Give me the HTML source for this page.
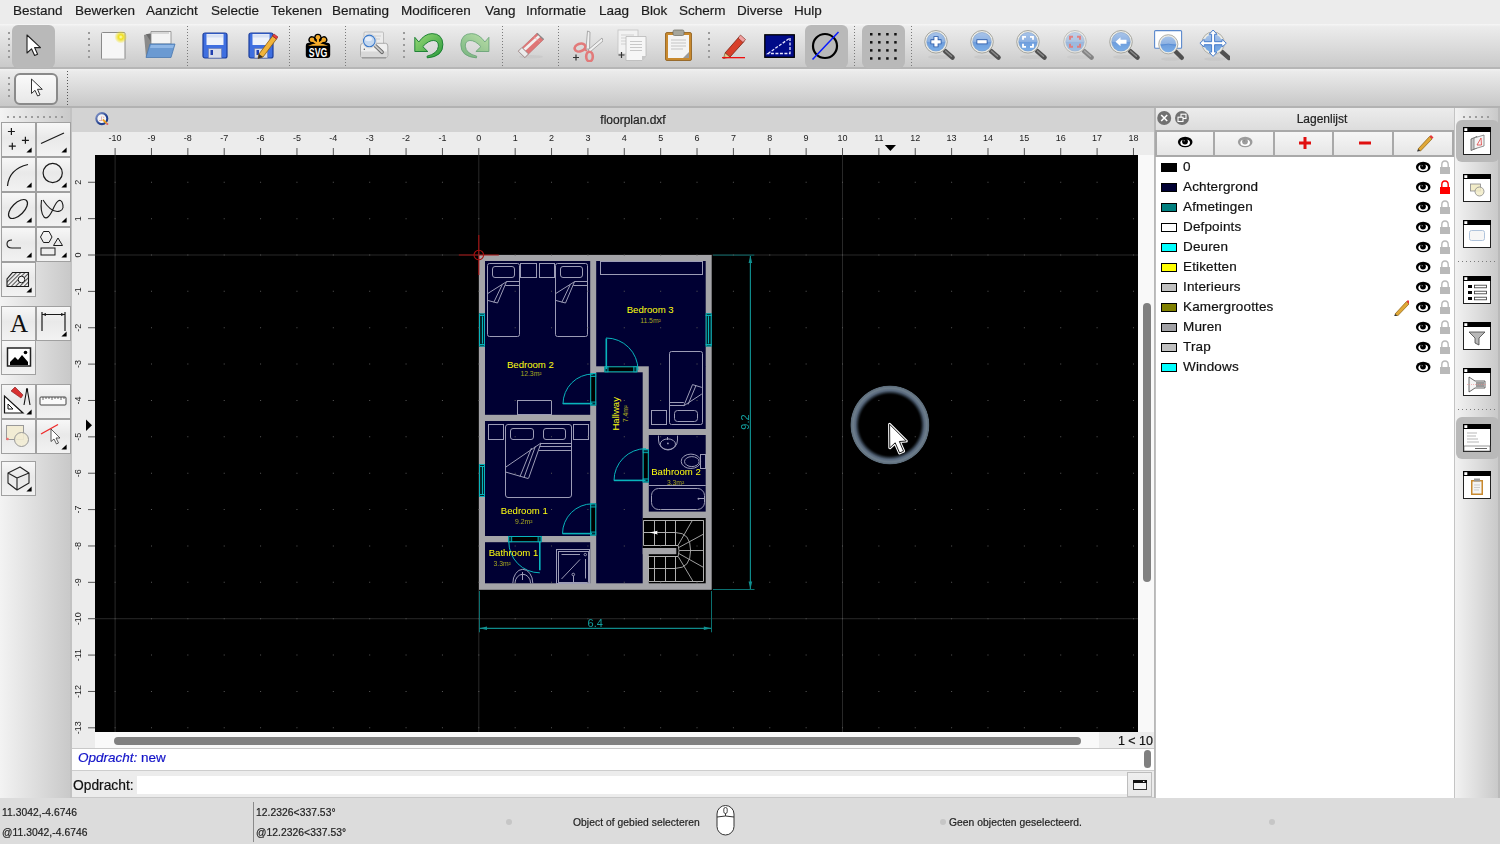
<!DOCTYPE html><html><head><meta charset="utf-8"><style>html,body{margin:0;padding:0;}body{width:1500px;height:844px;overflow:hidden;position:relative;background:#ececec;font-family:"Liberation Sans",sans-serif;}.t{will-change:transform;-webkit-text-stroke:0.2px currentColor}.g{will-change:transform}</style></head><body>
<div style="position:absolute;left:0px;top:0px;width:1500px;height:24px;background:#ececec"></div>
<div class="t" style="position:absolute;left:13.2px;top:4.17px;font-size:13.5px;line-height:13.5px;color:#1c1c1c;white-space:nowrap;">Bestand</div>
<div class="t" style="position:absolute;left:74.7px;top:4.17px;font-size:13.5px;line-height:13.5px;color:#1c1c1c;white-space:nowrap;">Bewerken</div>
<div class="t" style="position:absolute;left:145.89999999999998px;top:4.17px;font-size:13.5px;line-height:13.5px;color:#1c1c1c;white-space:nowrap;">Aanzicht</div>
<div class="t" style="position:absolute;left:210.7px;top:4.17px;font-size:13.5px;line-height:13.5px;color:#1c1c1c;white-space:nowrap;">Selectie</div>
<div class="t" style="position:absolute;left:271.2px;top:4.17px;font-size:13.5px;line-height:13.5px;color:#1c1c1c;white-space:nowrap;">Tekenen</div>
<div class="t" style="position:absolute;left:332.2px;top:4.17px;font-size:13.5px;line-height:13.5px;color:#1c1c1c;white-space:nowrap;">Bemating</div>
<div class="t" style="position:absolute;left:401.2px;top:4.17px;font-size:13.5px;line-height:13.5px;color:#1c1c1c;white-space:nowrap;">Modificeren</div>
<div class="t" style="position:absolute;left:485.2px;top:4.17px;font-size:13.5px;line-height:13.5px;color:#1c1c1c;white-space:nowrap;">Vang</div>
<div class="t" style="position:absolute;left:526.2px;top:4.17px;font-size:13.5px;line-height:13.5px;color:#1c1c1c;white-space:nowrap;">Informatie</div>
<div class="t" style="position:absolute;left:599.2px;top:4.17px;font-size:13.5px;line-height:13.5px;color:#1c1c1c;white-space:nowrap;">Laag</div>
<div class="t" style="position:absolute;left:640.7px;top:4.17px;font-size:13.5px;line-height:13.5px;color:#1c1c1c;white-space:nowrap;">Blok</div>
<div class="t" style="position:absolute;left:678.7px;top:4.17px;font-size:13.5px;line-height:13.5px;color:#1c1c1c;white-space:nowrap;">Scherm</div>
<div class="t" style="position:absolute;left:736.7px;top:4.17px;font-size:13.5px;line-height:13.5px;color:#1c1c1c;white-space:nowrap;">Diverse</div>
<div class="t" style="position:absolute;left:793.7px;top:4.17px;font-size:13.5px;line-height:13.5px;color:#1c1c1c;white-space:nowrap;">Hulp</div>
<div style="position:absolute;left:0px;top:24px;width:1500px;height:44px;background:linear-gradient(#f6f6f6 0,#ececec 6%,#dedede 45%,#c9c9c9 100%)"></div>
<div style="position:absolute;left:0px;top:67px;width:1500px;height:1.5px;background:#b6b6b6"></div>
<div style="position:absolute;left:0px;top:68.5px;width:1500px;height:38px;background:linear-gradient(#f2f2f2 0,#ebebeb 6%,#dcdcdc 45%,#c7c7c7 100%)"></div>
<div style="position:absolute;left:0px;top:106.3px;width:1500px;height:1.5px;background:#b2b2b2"></div>
<div style="position:absolute;left:7.5px;top:32.0px;width:2px;height:2px;background:#9a9a9a"></div><div style="position:absolute;left:7.5px;top:38.0px;width:2px;height:2px;background:#9a9a9a"></div><div style="position:absolute;left:7.5px;top:44.0px;width:2px;height:2px;background:#9a9a9a"></div><div style="position:absolute;left:7.5px;top:50.0px;width:2px;height:2px;background:#9a9a9a"></div><div style="position:absolute;left:7.5px;top:56.0px;width:2px;height:2px;background:#9a9a9a"></div>
<div style="position:absolute;left:12px;top:25px;width:43px;height:42.5px;background:#b9b9b9;border-radius:6px"></div>
<svg style="position:absolute;left:25px;top:34px" width="18" height="24" viewBox="0 0 18 24"><path d="M2 1 L2 19 L6.5 14.8 L9.6 21.5 L12.6 20.2 L9.6 13.6 L15.5 13.6 Z" fill="#fff" stroke="#222" stroke-width="1.1" stroke-linejoin="round"/></svg>
<div style="position:absolute;left:88px;top:32.0px;width:2px;height:2px;background:#9a9a9a"></div><div style="position:absolute;left:88px;top:38.0px;width:2px;height:2px;background:#9a9a9a"></div><div style="position:absolute;left:88px;top:44.0px;width:2px;height:2px;background:#9a9a9a"></div><div style="position:absolute;left:88px;top:50.0px;width:2px;height:2px;background:#9a9a9a"></div><div style="position:absolute;left:88px;top:56.0px;width:2px;height:2px;background:#9a9a9a"></div>
<svg style="position:absolute;left:100px;top:30px" width="30" height="32" viewBox="0 0 30 32"><defs><radialGradient id="sun" cx="0.5" cy="0.5" r="0.5"><stop offset="0" stop-color="#ffffc0"/><stop offset="0.35" stop-color="#f0e020"/><stop offset="1" stop-color="#f0e020" stop-opacity="0"/></radialGradient></defs><rect x="1.5" y="2.5" width="23.5" height="27" fill="#f6f6f6" stroke="#8a8a8a" stroke-width="1" rx="1"/><rect x="2" y="28.5" width="23" height="1.5" fill="#bbb"/><circle cx="20.8" cy="7" r="6.5" fill="url(#sun)"/></svg>
<svg style="position:absolute;left:143px;top:30px" width="34" height="30" viewBox="0 0 34 30"><path d="M1 5 L8 3 L8 27 L3 27 Z" fill="#8a8a8a"/><path d="M3 4 L22 4 L22 12 L8 12 Z" fill="#6a6a6a"/><path d="M8 1.5 L28 1.5 L28 14 L8 14 Z" fill="#f4f4f4" stroke="#888" stroke-width="0.8"/><path d="M7 3 L26 3" stroke="#bbb"/><path d="M7 14 L32 14 L28 27.5 L3 27.5 Z" fill="#6b9ad2" stroke="#4a78b0" stroke-width="0.8"/><path d="M8 15 L31 15 L30 18 L7 18 Z" fill="#8fb7e6"/></svg>
<div style="position:absolute;left:187.0px;top:26px;width:1px;height:40px;background:repeating-linear-gradient(180deg,#7a7a7a 0 1px,transparent 1px 3px)"></div>
<svg style="position:absolute;left:202px;top:32px" width="30" height="28" viewBox="0 0 30 28"><rect x="1" y="1" width="24" height="25" rx="2" fill="#3f6fe0" stroke="#1c3e9c" stroke-width="1.2"/><rect x="4.5" y="2" width="17" height="11" fill="#eef2fa"/><rect x="5" y="2.5" width="16" height="3" fill="#d6e0f4"/><rect x="6.5" y="16.5" width="13" height="9.5" fill="#d8dce8" stroke="#6a7ab0" stroke-width="0.6"/><rect x="8.5" y="18" width="2.5" height="5" fill="#2040b0"/></svg>
<svg style="position:absolute;left:248px;top:32px" width="30" height="28" viewBox="0 0 30 28"><rect x="1" y="1" width="24" height="25" rx="2" fill="#3f6fe0" stroke="#1c3e9c" stroke-width="1.2"/><rect x="4.5" y="2" width="17" height="11" fill="#eef2fa"/><rect x="5" y="2.5" width="16" height="3" fill="#d6e0f4"/><rect x="6.5" y="16.5" width="13" height="9.5" fill="#d8dce8" stroke="#6a7ab0" stroke-width="0.6"/><rect x="8.5" y="18" width="2.5" height="5" fill="#2040b0"/><path d="M11 22 L24.5 4 L28.5 7 L15 25 L10 26.5 Z" fill="#f2b43a" stroke="#8a5a10" stroke-width="0.8"/><path d="M24.5 4 L26 2 L30 5 L28.5 7 Z" fill="#e84040" stroke="#902020" stroke-width="0.6"/><path d="M10 26.5 L11 22 L15 25 Z" fill="#333"/></svg>
<div style="position:absolute;left:288.5px;top:26px;width:1px;height:40px;background:repeating-linear-gradient(180deg,#7a7a7a 0 1px,transparent 1px 3px)"></div>
<svg style="position:absolute;left:300px;top:28px" width="36" height="34" viewBox="0 0 36 34"><g stroke="#000" stroke-width="7.2" stroke-linecap="round"><path d="M18 15 L17.9 9.3 M18 15 L12 11.8 M18 15 L23.8 11.8"/></g><rect x="5.8" y="14.8" width="24.4" height="15.2" rx="3.2" fill="#000"/><g stroke="#f5ac2a" stroke-width="2.2" stroke-linecap="round"><path d="M18 16 L17.9 9.3 M17.5 16 L12 11.8 M18.5 16 L23.8 11.8"/></g><path d="M8 17.8 Q18 13.2 28.2 17.8 Z" fill="#f5ac2a"/><circle cx="17.9" cy="9.3" r="2.3" fill="#f5ac2a"/><circle cx="12" cy="11.8" r="2.3" fill="#f5ac2a"/><circle cx="23.8" cy="11.8" r="2.3" fill="#f5ac2a"/><text x="18.1" y="28.9" text-anchor="middle" font-family="Liberation Sans" font-weight="bold" font-size="13" fill="#fff" textLength="18.5" lengthAdjust="spacingAndGlyphs">SVG</text></svg>
<div style="position:absolute;left:345.0px;top:26px;width:1px;height:40px;background:repeating-linear-gradient(180deg,#7a7a7a 0 1px,transparent 1px 3px)"></div>
<svg style="position:absolute;left:354px;top:26px" width="40" height="38" viewBox="0 0 40 38"><rect x="10" y="6" width="19.5" height="13.5" rx="1" fill="#ececec" stroke="#b4b4b4" stroke-width="0.8"/><path d="M20 10h7M20 13h6" stroke="#cfcfcf" stroke-width="1"/><path d="M6.5 20 Q6.5 17.3 9 17.3 L31.5 17.3 Q33.8 17.3 33.8 20 L33.8 29.5 Q33.8 31.5 31.5 31.5 L8.8 31.5 Q6.5 31.5 6.5 29.5 Z" fill="#efefef" stroke="#9a9a9a" stroke-width="0.8"/><rect x="7" y="25.5" width="26.3" height="5.5" fill="#d8d8d8"/><rect x="8" y="31" width="24" height="1.6" fill="#9c9c9c"/><circle cx="10.3" cy="23.3" r="0.7" fill="#555"/><path d="M21 19.5 L28 26.2" stroke="#666" stroke-width="3.8" stroke-linecap="round"/><path d="M21 19.5 L28 26.2" stroke="#cacaca" stroke-width="1.8" stroke-linecap="round"/><circle cx="15.3" cy="14.9" r="7.1" fill="#f6f6f6" stroke="#c4c4c4" stroke-width="0.6"/><circle cx="15.3" cy="14.9" r="5.8" fill="#c4d8f0" stroke="#3a78c8" stroke-width="1.1"/><ellipse cx="14.5" cy="13" rx="3.5" ry="2.2" fill="#e6eefa"/></svg>
<div style="position:absolute;left:403px;top:32.0px;width:2px;height:2px;background:#9a9a9a"></div><div style="position:absolute;left:403px;top:38.0px;width:2px;height:2px;background:#9a9a9a"></div><div style="position:absolute;left:403px;top:44.0px;width:2px;height:2px;background:#9a9a9a"></div><div style="position:absolute;left:403px;top:50.0px;width:2px;height:2px;background:#9a9a9a"></div><div style="position:absolute;left:403px;top:56.0px;width:2px;height:2px;background:#9a9a9a"></div>
<svg style="position:absolute;left:410px;top:28px" width="38" height="34" viewBox="0 0 38 34"><defs><linearGradient id="ug" x1="0" y1="0" x2="1" y2="1"><stop offset="0" stop-color="#9ada78"/><stop offset="1" stop-color="#2a9a3a"/></linearGradient></defs><path d="M4.8 9.3 L4.8 23.5 L17.8 23.5 L12.8 18.6 Q18.5 12.3 23.8 12.5 Q28.6 13 28.4 18.2 Q27.8 25.5 17 28.2 L17.3 29.9 Q33.2 28.5 32.9 16.4 Q32.4 5.6 22.1 5.6 Q14.5 5.8 8.8 14 Z" fill="url(#ug)" stroke="#137a2c" stroke-width="0.9" stroke-linejoin="round"/></svg>
<svg style="position:absolute;left:456.1px;top:28px" width="38" height="34" viewBox="0 0 38 34"><g transform="translate(37.7 0) scale(-1 1)" opacity="0.55"><defs><linearGradient id="rg" x1="0" y1="0" x2="1" y2="1"><stop offset="0" stop-color="#9ada78"/><stop offset="1" stop-color="#2a9a3a"/></linearGradient></defs><path d="M4.8 9.3 L4.8 23.5 L17.8 23.5 L12.8 18.6 Q18.5 12.3 23.8 12.5 Q28.6 13 28.4 18.2 Q27.8 25.5 17 28.2 L17.3 29.9 Q33.2 28.5 32.9 16.4 Q32.4 5.6 22.1 5.6 Q14.5 5.8 8.8 14 Z" fill="url(#rg)" stroke="#137a2c" stroke-width="0.9" stroke-linejoin="round"/></g></svg>
<div style="position:absolute;left:501.8px;top:26px;width:1px;height:40px;background:repeating-linear-gradient(180deg,#7a7a7a 0 1px,transparent 1px 3px)"></div>
<svg style="position:absolute;left:510px;top:26px" width="40" height="38" viewBox="0 0 40 38"><ellipse cx="21" cy="30.8" rx="12" ry="1.7" fill="#c4c4c4" opacity="0.6"/><path d="M27 7.2 L33.6 13.5 L14.9 31.5 L8.3 25.2 Z" fill="#df7676" stroke="#b86a6a" stroke-width="0.6"/><path d="M13.5 22.5 L29.6 7.9 L31.6 9.8 L15.6 24.6 Z" fill="#f0f0f0"/><path d="M27 7.2 L33.6 13.5" stroke="#8a8a8a" stroke-width="1.3"/><path d="M23.5 10.5 L30 16" stroke="#e9a0a0" stroke-width="1" opacity="0.6"/><path d="M8.3 25.2 L11.9 21.6 L18.4 27.9 L14.9 31.5 Z" fill="#ececec" stroke="#8a8a8a" stroke-width="0.7"/></svg>
<div style="position:absolute;left:557.9px;top:26px;width:1px;height:40px;background:repeating-linear-gradient(180deg,#7a7a7a 0 1px,transparent 1px 3px)"></div>
<svg style="position:absolute;left:571px;top:30px" width="32" height="32" viewBox="0 0 32 32"><path d="M15 19 L16.5 1 L19 2 L18.5 19 Z" fill="#f0f0f0" stroke="#999" stroke-width="0.8"/><path d="M17 20 L31 8 L32 11 L19 22 Z" fill="#f0f0f0" stroke="#999" stroke-width="0.8"/><ellipse cx="9" cy="17.5" rx="5.5" ry="3.8" fill="none" stroke="#e27a7a" stroke-width="2.6" transform="rotate(-20 9 17.5)"/><ellipse cx="18.5" cy="26.5" rx="3.3" ry="4.8" fill="none" stroke="#e27a7a" stroke-width="2.6"/><path d="M13 19 L16 21" stroke="#e27a7a" stroke-width="2"/><path d="M2 27.5 L8 27.5 M5 24.5 L5 30.5" stroke="#333" stroke-width="1.2"/></svg>
<svg style="position:absolute;left:617px;top:29px" width="32" height="34" viewBox="0 0 32 34"><rect x="1" y="1" width="20" height="24" fill="#f2f2f2" stroke="#c4c4c4" stroke-width="0.8"/><path d="M4 6h13M4 9h13M4 12h13M4 15h13" stroke="#d0d0d0" stroke-width="1"/><path d="M9 7.5 L29 7.5 L29 27 L25 31.5 L9 31.5 Z" fill="#f6f6f6" stroke="#b8b8b8" stroke-width="0.8"/><path d="M25 31.5 L25 27 L29 27 Z" fill="#c8c8c8"/><path d="M13 12.5h12M13 15.5h12M13 18.5h12M13 21.5h12" stroke="#c8c8c8" stroke-width="1"/><path d="M1.5 26 L7.5 26 M4.5 23 L4.5 29" stroke="#333" stroke-width="1.2"/></svg>
<svg style="position:absolute;left:664px;top:29px" width="30" height="33" viewBox="0 0 30 33"><rect x="1.5" y="3.5" width="26" height="28" rx="1.5" fill="#c8892e" stroke="#8a5a18" stroke-width="0.8"/><rect x="4" y="6" width="21" height="23" fill="#f4f4f4"/><path d="M7 11h15M7 14h15M7 17h15M7 20h12" stroke="#c4c4c4" stroke-width="1"/><path d="M19 29 L25 29 L25 23 Z" fill="#9a9a9a"/><rect x="9" y="1" width="11" height="5.5" rx="1.5" fill="#a6a69c" stroke="#6a6a62" stroke-width="0.7"/></svg>
<div style="position:absolute;left:708px;top:32.0px;width:2px;height:2px;background:#9a9a9a"></div><div style="position:absolute;left:708px;top:38.0px;width:2px;height:2px;background:#9a9a9a"></div><div style="position:absolute;left:708px;top:44.0px;width:2px;height:2px;background:#9a9a9a"></div><div style="position:absolute;left:708px;top:50.0px;width:2px;height:2px;background:#9a9a9a"></div><div style="position:absolute;left:708px;top:56.0px;width:2px;height:2px;background:#9a9a9a"></div>
<svg style="position:absolute;left:721px;top:33px" width="26" height="26" viewBox="0 0 26 26"><path d="M4 20 L18 4 L23 8.5 L9 24 Z" fill="#d8402a" stroke="#7a2010" stroke-width="0.8"/><path d="M17 5 L19.5 2 L24.5 6.5 L22 9.5 Z" fill="#f0a0a0" stroke="#7a2010" stroke-width="0.6"/><path d="M4 20 L9 24 L2.5 25.5 Z" fill="#e8c890" stroke="#6a4a20" stroke-width="0.6"/><path d="M2.5 25.5 L4 23.5 L5 24.8Z" fill="#222"/><rect x="1" y="24" width="23" height="1.3" fill="#ee1010"/></svg>
<svg style="position:absolute;left:764px;top:34px" width="32" height="25" viewBox="0 0 32 25"><rect x="0.8" y="0.8" width="29.5" height="22.5" fill="#000a88" stroke="#000" stroke-width="1.3"/><path d="M4 19.5 L26 4 L26 19.5 Z" fill="none" stroke="#e8e8ff" stroke-width="1.3" stroke-dasharray="3 1.5"/></svg>
<div style="position:absolute;left:805px;top:25px;width:42.5px;height:42.5px;background:#b9b9b9;border-radius:6px"></div>
<svg style="position:absolute;left:810px;top:30px" width="32" height="32" viewBox="0 0 32 32"><circle cx="15" cy="16" r="12" fill="none" stroke="#000" stroke-width="2.2"/><path d="M2.5 29.5 L28.5 2" stroke="#0a1aff" stroke-width="1.5"/></svg>
<div style="position:absolute;left:853.9px;top:26px;width:1px;height:40px;background:repeating-linear-gradient(180deg,#7a7a7a 0 1px,transparent 1px 3px)"></div>
<div style="position:absolute;left:862px;top:25px;width:42.5px;height:42.5px;background:#b9b9b9;border-radius:6px"></div>
<svg style="position:absolute;left:869.8px;top:33.2px" width="28" height="28" viewBox="0 0 28 28"><rect x="0.00" y="0.00" width="2.5" height="2.5" fill="#111"/><rect x="0.00" y="8.07" width="2.5" height="2.5" fill="#111"/><rect x="0.00" y="16.14" width="2.5" height="2.5" fill="#111"/><rect x="0.00" y="24.21" width="2.5" height="2.5" fill="#111"/><rect x="8.07" y="0.00" width="2.5" height="2.5" fill="#111"/><rect x="8.07" y="8.07" width="2.5" height="2.5" fill="#111"/><rect x="8.07" y="16.14" width="2.5" height="2.5" fill="#111"/><rect x="8.07" y="24.21" width="2.5" height="2.5" fill="#111"/><rect x="16.14" y="0.00" width="2.5" height="2.5" fill="#111"/><rect x="16.14" y="8.07" width="2.5" height="2.5" fill="#111"/><rect x="16.14" y="16.14" width="2.5" height="2.5" fill="#111"/><rect x="16.14" y="24.21" width="2.5" height="2.5" fill="#111"/><rect x="24.21" y="0.00" width="2.5" height="2.5" fill="#111"/><rect x="24.21" y="8.07" width="2.5" height="2.5" fill="#111"/><rect x="24.21" y="16.14" width="2.5" height="2.5" fill="#111"/><rect x="24.21" y="24.21" width="2.5" height="2.5" fill="#111"/></svg>
<div style="position:absolute;left:910.9px;top:26px;width:1px;height:40px;background:repeating-linear-gradient(180deg,#7a7a7a 0 1px,transparent 1px 3px)"></div>
<svg style="position:absolute;left:918px;top:26px" width="40" height="38" viewBox="0 0 40 38"><g opacity="1"><defs><linearGradient id="mg918" x1="0" y1="0" x2="0" y2="1"><stop offset="0" stop-color="#a8c4ea"/><stop offset="0.48" stop-color="#8eb2e2"/><stop offset="0.52" stop-color="#6e9ddc"/><stop offset="1" stop-color="#7aaee8"/></linearGradient></defs><ellipse cx="22" cy="31" rx="12" ry="2" fill="#bbb" opacity="0.4"/><path d="M27 25 L34.5 31.5" stroke="#505050" stroke-width="4.6" stroke-linecap="round"/><path d="M27.5 25 L33.5 30.3" stroke="#8a8a8a" stroke-width="1.4" stroke-linecap="round"/><circle cx="18" cy="15.8" r="11.3" fill="#ecece6" stroke="#a6a6a0" stroke-width="1"/><circle cx="18" cy="15.8" r="9.3" fill="url(#mg918)" stroke="#7a9cc8" stroke-width="0.6"/><g transform="translate(6 3.8)"><path d="M12 6.5v11M6.5 12h11" stroke="#2a5aa8" stroke-width="5"/><path d="M12 7.3v9.4M7.3 12h9.4" stroke="#fff" stroke-width="3.3"/></g></g></svg>
<svg style="position:absolute;left:964.2px;top:26px" width="40" height="38" viewBox="0 0 40 38"><g opacity="1"><defs><linearGradient id="mg964" x1="0" y1="0" x2="0" y2="1"><stop offset="0" stop-color="#a8c4ea"/><stop offset="0.48" stop-color="#8eb2e2"/><stop offset="0.52" stop-color="#6e9ddc"/><stop offset="1" stop-color="#7aaee8"/></linearGradient></defs><ellipse cx="22" cy="31" rx="12" ry="2" fill="#bbb" opacity="0.4"/><path d="M27 25 L34.5 31.5" stroke="#505050" stroke-width="4.6" stroke-linecap="round"/><path d="M27.5 25 L33.5 30.3" stroke="#8a8a8a" stroke-width="1.4" stroke-linecap="round"/><circle cx="18" cy="15.8" r="11.3" fill="#ecece6" stroke="#a6a6a0" stroke-width="1"/><circle cx="18" cy="15.8" r="9.3" fill="url(#mg964)" stroke="#7a9cc8" stroke-width="0.6"/><g transform="translate(6 3.8)"><path d="M6.5 12h11" stroke="#2a5aa8" stroke-width="5"/><path d="M7.3 12h9.4" stroke="#fff" stroke-width="3.3"/></g></g></svg>
<svg style="position:absolute;left:1010.4px;top:26px" width="40" height="38" viewBox="0 0 40 38"><g opacity="1"><defs><linearGradient id="mg1010" x1="0" y1="0" x2="0" y2="1"><stop offset="0" stop-color="#a8c4ea"/><stop offset="0.48" stop-color="#8eb2e2"/><stop offset="0.52" stop-color="#6e9ddc"/><stop offset="1" stop-color="#7aaee8"/></linearGradient></defs><ellipse cx="22" cy="31" rx="12" ry="2" fill="#bbb" opacity="0.4"/><path d="M27 25 L34.5 31.5" stroke="#505050" stroke-width="4.6" stroke-linecap="round"/><path d="M27.5 25 L33.5 30.3" stroke="#8a8a8a" stroke-width="1.4" stroke-linecap="round"/><circle cx="18" cy="15.8" r="11.3" fill="#ecece6" stroke="#a6a6a0" stroke-width="1"/><circle cx="18" cy="15.8" r="9.3" fill="url(#mg1010)" stroke="#7a9cc8" stroke-width="0.6"/><g transform="translate(6 3.8)"><path d="M7 10V7h3M14 7h3v3M17 14v3h-3M10 17H7v-3" stroke="#fff" stroke-width="1.8" fill="none"/></g></g></svg>
<svg style="position:absolute;left:1056.7px;top:26px" width="40" height="38" viewBox="0 0 40 38"><g opacity="0.6"><defs><linearGradient id="mg1056" x1="0" y1="0" x2="0" y2="1"><stop offset="0" stop-color="#a8c4ea"/><stop offset="0.48" stop-color="#8eb2e2"/><stop offset="0.52" stop-color="#6e9ddc"/><stop offset="1" stop-color="#7aaee8"/></linearGradient></defs><ellipse cx="22" cy="31" rx="12" ry="2" fill="#bbb" opacity="0.4"/><path d="M27 25 L34.5 31.5" stroke="#505050" stroke-width="4.6" stroke-linecap="round"/><path d="M27.5 25 L33.5 30.3" stroke="#8a8a8a" stroke-width="1.4" stroke-linecap="round"/><circle cx="18" cy="15.8" r="11.3" fill="#ecece6" stroke="#a6a6a0" stroke-width="1"/><circle cx="18" cy="15.8" r="9.3" fill="url(#mg1056)" stroke="#7a9cc8" stroke-width="0.6"/><g transform="translate(6 3.8)"><path d="M7 10V7h3M14 7h3v3M17 14v3h-3M10 17H7v-3" stroke="#e04040" stroke-width="2" fill="none"/></g></g></svg>
<svg style="position:absolute;left:1102.9px;top:26px" width="40" height="38" viewBox="0 0 40 38"><g opacity="1"><defs><linearGradient id="mg1102" x1="0" y1="0" x2="0" y2="1"><stop offset="0" stop-color="#a8c4ea"/><stop offset="0.48" stop-color="#8eb2e2"/><stop offset="0.52" stop-color="#6e9ddc"/><stop offset="1" stop-color="#7aaee8"/></linearGradient></defs><ellipse cx="22" cy="31" rx="12" ry="2" fill="#bbb" opacity="0.4"/><path d="M27 25 L34.5 31.5" stroke="#505050" stroke-width="4.6" stroke-linecap="round"/><path d="M27.5 25 L33.5 30.3" stroke="#8a8a8a" stroke-width="1.4" stroke-linecap="round"/><circle cx="18" cy="15.8" r="11.3" fill="#ecece6" stroke="#a6a6a0" stroke-width="1"/><circle cx="18" cy="15.8" r="9.3" fill="url(#mg1102)" stroke="#7a9cc8" stroke-width="0.6"/><g transform="translate(6 3.8)"><path d="M6.5 12 L11.5 7.5 L11.5 10 L17.5 10 L17.5 14 L11.5 14 L11.5 16.5 Z" fill="#fff"/></g></g></svg>
<svg style="position:absolute;left:1150px;top:26px" width="40" height="38" viewBox="0 0 40 38"><rect x="4.6" y="4.6" width="27" height="17.6" rx="1" fill="#fff" stroke="#5a88cc" stroke-width="1.1"/><ellipse cx="21" cy="33" rx="10" ry="1.8" fill="#bbb" opacity="0.4"/><path d="M25.3 25.3 L31.8 31.8" stroke="#505050" stroke-width="4.4" stroke-linecap="round"/><circle cx="18.3" cy="18.3" r="9.6" fill="#ecece6" stroke="#a6a6a0" stroke-width="0.9"/><circle cx="18.3" cy="18.3" r="7.9" fill="url(#mg1010)"/><path d="M10.8 19.3 Q18.3 17 25.8 19.3" stroke="#5a8ed4" stroke-width="1" fill="none"/></svg>
<svg style="position:absolute;left:1190px;top:26px" width="40" height="38" viewBox="0 0 40 38"><ellipse cx="25" cy="33" rx="11" ry="1.8" fill="#bbb" opacity="0.4"/><path d="M31.5 25.5 L39 32" stroke="#505050" stroke-width="4.4" stroke-linecap="round"/><circle cx="23.1" cy="17.2" r="11.3" fill="#ecece6" stroke="#a6a6a0" stroke-width="0.9"/><circle cx="23.1" cy="17.2" r="9.1" fill="url(#mg1010)"/><path d="M23.1 4 L27 8.3 L24.6 8.3 L24.6 15.7 L32 15.7 L32 13.3 L36.3 17.2 L32 21.1 L32 18.7 L24.6 18.7 L24.6 26.1 L27 26.1 L23.1 30.4 L19.2 26.1 L21.6 26.1 L21.6 18.7 L14.2 18.7 L14.2 21.1 L9.9 17.2 L14.2 13.3 L14.2 15.7 L21.6 15.7 L21.6 8.3 L19.2 8.3 Z" fill="#fff" stroke="#3a74c8" stroke-width="0.9" stroke-linejoin="round"/></svg>
<div style="position:absolute;left:7.5px;top:76.5px;width:2px;height:2px;background:#9a9a9a"></div><div style="position:absolute;left:7.5px;top:82.7px;width:2px;height:2px;background:#9a9a9a"></div><div style="position:absolute;left:7.5px;top:88.8px;width:2px;height:2px;background:#9a9a9a"></div><div style="position:absolute;left:7.5px;top:95.0px;width:2px;height:2px;background:#9a9a9a"></div>
<div style="position:absolute;left:14px;top:72.5px;width:44px;height:32px;box-sizing:border-box;border:2px solid #8a8a8a;border-radius:6px;background:linear-gradient(#fafafa,#e8e8e8)"></div>
<svg style="position:absolute;left:30px;top:78px" width="16" height="22" viewBox="0 0 16 22"><path d="M1.5 1 L1.5 15.5 L5 12.3 L7.6 18 L10 17 L7.5 11.3 L12.3 11.3 Z" fill="#fff" stroke="#333" stroke-width="1" stroke-linejoin="round"/></svg>
<div style="position:absolute;left:67.0px;top:71px;width:1px;height:34px;background:repeating-linear-gradient(180deg,#555 0 1px,transparent 1px 3px)"></div>
<div style="position:absolute;left:0px;top:108px;width:70px;height:690px;background:linear-gradient(90deg,#f3f3f3,#e2e2e2 40%,#c9c9c9)"></div>
<div style="position:absolute;left:70px;top:108px;width:2px;height:690px;background:#c2c2c2"></div>
<div style="position:absolute;left:7px;top:116px;width:2px;height:2px;background:#9c9c9c"></div>
<div style="position:absolute;left:13px;top:116px;width:2px;height:2px;background:#9c9c9c"></div>
<div style="position:absolute;left:19px;top:116px;width:2px;height:2px;background:#9c9c9c"></div>
<div style="position:absolute;left:25px;top:116px;width:2px;height:2px;background:#9c9c9c"></div>
<div style="position:absolute;left:31px;top:116px;width:2px;height:2px;background:#9c9c9c"></div>
<div style="position:absolute;left:37px;top:116px;width:2px;height:2px;background:#9c9c9c"></div>
<div style="position:absolute;left:43px;top:116px;width:2px;height:2px;background:#9c9c9c"></div>
<div style="position:absolute;left:49px;top:116px;width:2px;height:2px;background:#9c9c9c"></div>
<div style="position:absolute;left:55px;top:116px;width:2px;height:2px;background:#9c9c9c"></div>
<div style="position:absolute;left:61px;top:116px;width:2px;height:2px;background:#9c9c9c"></div>
<div style="position:absolute;left:1px;top:122px;width:35px;height:35px;box-sizing:border-box;border:1px solid #a0a0a0;background:linear-gradient(#f7f7f7,#e9e9e9 45%,#f2f2f2)"></div><svg style="position:absolute;left:1px;top:122px" width="35" height="35" viewBox="0 0 35 35"><path d="M6.9 9.5h7M10.4 6v7M20.9 18.3h7M24.4 14.8v7M7.8 24.2h7M11.3 20.7v7" stroke="#1a1a1a" stroke-width="1.2"/><path d="M30.6 25.4 L30.6 30.6 L25.4 30.6 Z" fill="#000"/></svg>
<div style="position:absolute;left:36px;top:122px;width:35px;height:35px;box-sizing:border-box;border:1px solid #a0a0a0;background:linear-gradient(#f7f7f7,#e9e9e9 45%,#f2f2f2)"></div><svg style="position:absolute;left:36px;top:122px" width="35" height="35" viewBox="0 0 35 35"><path d="M5 21.5 L28 11" stroke="#1a1a1a" stroke-width="1.2"/><path d="M30.6 25.4 L30.6 30.6 L25.4 30.6 Z" fill="#000"/></svg>
<div style="position:absolute;left:1px;top:157px;width:35px;height:35px;box-sizing:border-box;border:1px solid #a0a0a0;background:linear-gradient(#f7f7f7,#e9e9e9 45%,#f2f2f2)"></div><svg style="position:absolute;left:1px;top:157px" width="35" height="35" viewBox="0 0 35 35"><path d="M6.5 29 Q8 12 27 7.5" stroke="#1a1a1a" stroke-width="1.2" fill="none"/><path d="M30.6 25.4 L30.6 30.6 L25.4 30.6 Z" fill="#000"/></svg>
<div style="position:absolute;left:36px;top:157px;width:35px;height:35px;box-sizing:border-box;border:1px solid #a0a0a0;background:linear-gradient(#f7f7f7,#e9e9e9 45%,#f2f2f2)"></div><svg style="position:absolute;left:36px;top:157px" width="35" height="35" viewBox="0 0 35 35"><circle cx="16.7" cy="16" r="9.6" stroke="#1a1a1a" stroke-width="1.2" fill="none"/><path d="M30.6 25.4 L30.6 30.6 L25.4 30.6 Z" fill="#000"/></svg>
<div style="position:absolute;left:1px;top:192px;width:35px;height:35px;box-sizing:border-box;border:1px solid #a0a0a0;background:linear-gradient(#f7f7f7,#e9e9e9 45%,#f2f2f2)"></div><svg style="position:absolute;left:1px;top:192px" width="35" height="35" viewBox="0 0 35 35"><ellipse cx="17" cy="17" rx="12" ry="6" transform="rotate(-45 17 17)" stroke="#1a1a1a" stroke-width="1.2" fill="none"/><path d="M30.6 25.4 L30.6 30.6 L25.4 30.6 Z" fill="#000"/></svg>
<div style="position:absolute;left:36px;top:192px;width:35px;height:35px;box-sizing:border-box;border:1px solid #a0a0a0;background:linear-gradient(#f7f7f7,#e9e9e9 45%,#f2f2f2)"></div><svg style="position:absolute;left:36px;top:192px" width="35" height="35" viewBox="0 0 35 35"><path d="M5.5 8 Q4 20 8 25 Q12 29 18 15 Q23 5 26 10 Q29 17 24 19 Q16 22 7 8" stroke="#1a1a1a" stroke-width="1.1" fill="none"/><path d="M30.6 25.4 L30.6 30.6 L25.4 30.6 Z" fill="#000"/></svg>
<div style="position:absolute;left:1px;top:227px;width:35px;height:35px;box-sizing:border-box;border:1px solid #a0a0a0;background:linear-gradient(#f7f7f7,#e9e9e9 45%,#f2f2f2)"></div><svg style="position:absolute;left:1px;top:227px" width="35" height="35" viewBox="0 0 35 35"><path d="M11 12 Q6 12 6 16 Q6 20 11 20 L20 20" stroke="#1a1a1a" stroke-width="1.1" fill="none" transform="translate(0 1)"/><path d="M30.6 25.4 L30.6 30.6 L25.4 30.6 Z" fill="#000"/></svg>
<div style="position:absolute;left:36px;top:227px;width:35px;height:35px;box-sizing:border-box;border:1px solid #a0a0a0;background:linear-gradient(#f7f7f7,#e9e9e9 45%,#f2f2f2)"></div><svg style="position:absolute;left:36px;top:227px" width="35" height="35" viewBox="0 0 35 35"><path d="M7.5 4.5 L13 4.5 L16 10 L13 15.5 L7.5 15.5 L4.5 10 Z M22 11 L26.5 18.5 L17.5 18.5 Z" stroke="#1a1a1a" stroke-width="1" fill="none"/><rect x="5" y="21" width="14" height="7" stroke="#1a1a1a" stroke-width="1" fill="none"/><path d="M30.6 25.4 L30.6 30.6 L25.4 30.6 Z" fill="#000"/></svg>
<div style="position:absolute;left:1px;top:262px;width:35px;height:35px;box-sizing:border-box;border:1px solid #a0a0a0;background:linear-gradient(#f7f7f7,#e9e9e9 45%,#f2f2f2)"></div><svg style="position:absolute;left:1px;top:262px" width="35" height="35" viewBox="0 0 35 35"><defs><pattern id="hp" width="3" height="3" patternUnits="userSpaceOnUse" patternTransform="rotate(45)"><rect width="1" height="3" fill="#555"/></pattern></defs><path d="M6 24.5 L6 17 L11.5 10.5 L27.5 10.5 L27.5 24.5 Z" fill="url(#hp)" stroke="#1a1a1a" stroke-width="1.1"/><circle cx="20.5" cy="17.5" r="3.3" fill="#f2f2f2" stroke="#1a1a1a" stroke-width="1"/><path d="M30.6 25.4 L30.6 30.6 L25.4 30.6 Z" fill="#000"/></svg>
<div style="position:absolute;left:1px;top:305.5px;width:35px;height:35px;box-sizing:border-box;border:1px solid #a0a0a0;background:linear-gradient(#f7f7f7,#e9e9e9 45%,#f2f2f2)"></div><svg style="position:absolute;left:1px;top:305.5px" width="35" height="35" viewBox="0 0 35 35"><text x="18" y="25.8" text-anchor="middle" font-family="Liberation Serif" font-size="25" fill="#111">A</text></svg>
<div style="position:absolute;left:36px;top:305.5px;width:35px;height:35px;box-sizing:border-box;border:1px solid #a0a0a0;background:linear-gradient(#f7f7f7,#e9e9e9 45%,#f2f2f2)"></div><svg style="position:absolute;left:36px;top:305.5px" width="35" height="35" viewBox="0 0 35 35"><path d="M6 6 L6 25 M29 6 L29 25 M6 8.5 L29 8.5" stroke="#1a1a1a" stroke-width="1.2"/><path d="M6 8.5 L10 7 L10 10 Z M29 8.5 L25 7 L25 10 Z" fill="#1a1a1a"/><path d="M30.6 25.4 L30.6 30.6 L25.4 30.6 Z" fill="#000"/></svg>
<div style="position:absolute;left:1px;top:340px;width:35px;height:35px;box-sizing:border-box;border:1px solid #a0a0a0;background:linear-gradient(#f7f7f7,#e9e9e9 45%,#f2f2f2)"></div><svg style="position:absolute;left:1px;top:340px" width="35" height="35" viewBox="0 0 35 35"><rect x="6.5" y="8" width="23" height="18" fill="#fff" stroke="#222" stroke-width="1.5"/><path d="M9 25 L9 22 L14 17 L17 20 L21 15 L27 22 L27 25 Z" fill="#000"/><circle cx="24.5" cy="12.5" r="1.8" fill="#000"/></svg>
<div style="position:absolute;left:1px;top:383.5px;width:35px;height:35px;box-sizing:border-box;border:1px solid #a0a0a0;background:linear-gradient(#f7f7f7,#e9e9e9 45%,#f2f2f2)"></div><svg style="position:absolute;left:1px;top:383.5px" width="35" height="35" viewBox="0 0 35 35"><path d="M3.5 29 L3.5 12 L22 29 Z" fill="#fff" stroke="#111" stroke-width="1.2"/><path d="M7 25 L7 20 L12 25 Z" fill="none" stroke="#111" stroke-width="1"/><path d="M10 7 L14 3 L22 11 L20 14 Z" fill="#d83030" stroke="#801818" stroke-width="0.6"/><path d="M26 4 L23 21 M26 4 L29 21" stroke="#111" stroke-width="1.1"/><circle cx="26" cy="6" r="1.2" fill="#111"/><path d="M30.6 25.4 L30.6 30.6 L25.4 30.6 Z" fill="#000"/></svg>
<div style="position:absolute;left:36px;top:383.5px;width:35px;height:35px;box-sizing:border-box;border:1px solid #a0a0a0;background:linear-gradient(#f7f7f7,#e9e9e9 45%,#f2f2f2)"></div><svg style="position:absolute;left:36px;top:383.5px" width="35" height="35" viewBox="0 0 35 35"><rect x="4" y="13" width="26" height="8" rx="1" fill="#fafafa" stroke="#444" stroke-width="1"/><path d="M7 13v3M10 13v2M13 13v2M16 13v3M19 13v2M22 13v2M25 13v3M28 13v2" stroke="#444" stroke-width="0.8"/></svg>
<div style="position:absolute;left:1px;top:418.5px;width:35px;height:35px;box-sizing:border-box;border:1px solid #a0a0a0;background:linear-gradient(#f7f7f7,#e9e9e9 45%,#f2f2f2)"></div><svg style="position:absolute;left:1px;top:418.5px" width="35" height="35" viewBox="0 0 35 35"><rect x="5.5" y="6.5" width="17" height="14" fill="#f2ecd4" stroke="#999" stroke-width="1"/><circle cx="20.5" cy="20.5" r="7" fill="#f2ecd4" fill-opacity="0.9" stroke="#999" stroke-width="1"/><circle cx="6.5" cy="20" r="1.3" fill="#f07070"/></svg>
<div style="position:absolute;left:36px;top:418.5px;width:35px;height:35px;box-sizing:border-box;border:1px solid #a0a0a0;background:linear-gradient(#f7f7f7,#e9e9e9 45%,#f2f2f2)"></div><svg style="position:absolute;left:36px;top:418.5px" width="35" height="35" viewBox="0 0 35 35"><path d="M5 15 L22 5.5" stroke="#ee2a2a" stroke-width="1.4"/><path d="M15 10 L15 22.5 L18 20 L20.5 25 L22.5 24 L20 19 L24 19 Z" fill="#fff" stroke="#333" stroke-width="0.8"/><path d="M30.6 25.4 L30.6 30.6 L25.4 30.6 Z" fill="#000"/></svg>
<div style="position:absolute;left:1px;top:461px;width:35px;height:35px;box-sizing:border-box;border:1px solid #a0a0a0;background:linear-gradient(#f7f7f7,#e9e9e9 45%,#f2f2f2)"></div><svg style="position:absolute;left:1px;top:461px" width="35" height="35" viewBox="0 0 35 35"><path d="M7 12 L19 6 L28 12 L28 22 L16 29 L7 22 Z M7 12 L16 17 L28 12 M16 17 L16 29" fill="none" stroke="#222" stroke-width="1.1" stroke-linejoin="round"/><path d="M30.6 25.4 L30.6 30.6 L25.4 30.6 Z" fill="#000"/></svg>
<div style="position:absolute;left:72px;top:108px;width:1082px;height:24px;background:#d3d3d3"></div>
<div class="t" style="position:absolute;left:333px;width:600px;text-align:center;top:113.54px;font-size:12px;line-height:12px;color:#222;white-space:nowrap;">floorplan.dxf</div>
<svg style="position:absolute;left:94px;top:111px" width="16" height="16" viewBox="0 0 16 16"><defs><linearGradient id="mdg" x1="0" y1="0" x2="1" y2="1"><stop offset="0" stop-color="#8a9ccc"/><stop offset="0.6" stop-color="#23408e"/></linearGradient></defs><circle cx="7.8" cy="7.6" r="5.5" fill="#f4f4f4" stroke="url(#mdg)" stroke-width="2.1"/><path d="M5 9.5h3M7.5 5.5v4M9 5.5l1 1.5" stroke="#d07070" stroke-width="0.5"/><path d="M8.8 8.5 L12.6 12.3" stroke="#f0a020" stroke-width="1.8"/><circle cx="13.3" cy="13" r="1.1" fill="#e06060"/></svg>
<div style="position:absolute;left:72px;top:132px;width:1082px;height:23px;background:#ececec"></div>
<div style="position:absolute;left:72px;top:155px;width:23px;height:593px;background:#ececec"></div>
<div style="position:absolute;left:95px;top:155px;width:1043px;height:577px;background:#000"></div>
<div style="position:absolute;left:1138px;top:155px;width:16px;height:577px;background:#f9f9f9"></div>
<div style="position:absolute;left:1143px;top:303px;width:8px;height:279px;background:#808080;border-radius:4px"></div>
<div style="position:absolute;left:95px;top:732px;width:1004px;height:16px;background:#f9f9f9"></div>
<div style="position:absolute;left:114px;top:737px;width:967px;height:8px;background:#808080;border-radius:4px"></div>
<div style="position:absolute;left:1099px;top:732px;width:55px;height:16px;background:#ececec"></div>
<div class="t" style="position:absolute;left:553px;width:600px;text-align:right;top:735.22px;font-size:12.5px;line-height:12.5px;color:#111;white-space:nowrap;">1 &lt; 10</div>
<div style="position:absolute;left:72px;top:748px;width:1082px;height:1px;background:#c8c8c8"></div>
<div style="position:absolute;left:72px;top:749px;width:1082px;height:21px;background:#fff"></div>
<div class="t" style="position:absolute;left:77.5px;top:751.37px;font-size:13.5px;line-height:13.5px;color:#1414c8;white-space:nowrap;"><i>Opdracht:</i> new</div>
<div style="position:absolute;left:1144px;top:750px;width:7px;height:17.5px;background:#808080;border-radius:3.5px"></div>
<div style="position:absolute;left:72px;top:770px;width:1082px;height:1px;background:#cdcdcd"></div>
<div style="position:absolute;left:72px;top:771px;width:1082px;height:26px;background:#ececec"></div>
<div class="t" style="position:absolute;left:72.8px;top:778.52px;font-size:13.8px;line-height:13.8px;color:#111;white-space:nowrap;">Opdracht:</div>
<div style="position:absolute;left:137px;top:776px;width:990px;height:18px;background:#fff"></div>
<div style="position:absolute;left:1127px;top:772px;width:25px;height:25px;background:linear-gradient(#efefef,#e6e6e6);border:1px solid #bdbdbd;box-sizing:border-box"></div>
<svg style="position:absolute;left:1133px;top:780px;" width="14" height="10" viewBox="0 0 14 10"><rect x="0.5" y="0.5" width="13" height="9" fill="#f4f4f4" stroke="#333"/><rect x="0" y="0" width="14" height="3" fill="#111"/><rect x="10" y="1" width="1.5" height="1" fill="#fff"/></svg>
<div style="position:absolute;left:72px;top:797px;width:1082px;height:1px;background:#c8c8c8"></div>
<div style="position:absolute;left:1154px;top:108px;width:2px;height:690px;background:#b8b8b8"></div>
<div style="position:absolute;left:1156px;top:797px;width:299px;height:1.2px;background:#c4c4c4"></div>
<svg class="g" style="position:absolute;left:0;top:0" width="1500" height="160" viewBox="0 0 1500 160"><g font-family="Liberation Sans, sans-serif"><rect x="114.60" y="148" width="1" height="7" fill="#555"/><text x="115.10" y="141" font-size="9" text-anchor="middle" fill="#222">-10</text><rect x="150.97" y="148" width="1" height="7" fill="#555"/><text x="151.47" y="141" font-size="9" text-anchor="middle" fill="#222">-9</text><rect x="187.34" y="148" width="1" height="7" fill="#555"/><text x="187.84" y="141" font-size="9" text-anchor="middle" fill="#222">-8</text><rect x="223.71" y="148" width="1" height="7" fill="#555"/><text x="224.21" y="141" font-size="9" text-anchor="middle" fill="#222">-7</text><rect x="260.08" y="148" width="1" height="7" fill="#555"/><text x="260.58" y="141" font-size="9" text-anchor="middle" fill="#222">-6</text><rect x="296.45" y="148" width="1" height="7" fill="#555"/><text x="296.95" y="141" font-size="9" text-anchor="middle" fill="#222">-5</text><rect x="332.82" y="148" width="1" height="7" fill="#555"/><text x="333.32" y="141" font-size="9" text-anchor="middle" fill="#222">-4</text><rect x="369.19" y="148" width="1" height="7" fill="#555"/><text x="369.69" y="141" font-size="9" text-anchor="middle" fill="#222">-3</text><rect x="405.56" y="148" width="1" height="7" fill="#555"/><text x="406.06" y="141" font-size="9" text-anchor="middle" fill="#222">-2</text><rect x="441.93" y="148" width="1" height="7" fill="#555"/><text x="442.43" y="141" font-size="9" text-anchor="middle" fill="#222">-1</text><rect x="478.30" y="148" width="1" height="7" fill="#555"/><text x="478.80" y="141" font-size="9" text-anchor="middle" fill="#222">0</text><rect x="514.67" y="148" width="1" height="7" fill="#555"/><text x="515.17" y="141" font-size="9" text-anchor="middle" fill="#222">1</text><rect x="551.04" y="148" width="1" height="7" fill="#555"/><text x="551.54" y="141" font-size="9" text-anchor="middle" fill="#222">2</text><rect x="587.41" y="148" width="1" height="7" fill="#555"/><text x="587.91" y="141" font-size="9" text-anchor="middle" fill="#222">3</text><rect x="623.78" y="148" width="1" height="7" fill="#555"/><text x="624.28" y="141" font-size="9" text-anchor="middle" fill="#222">4</text><rect x="660.15" y="148" width="1" height="7" fill="#555"/><text x="660.65" y="141" font-size="9" text-anchor="middle" fill="#222">5</text><rect x="696.52" y="148" width="1" height="7" fill="#555"/><text x="697.02" y="141" font-size="9" text-anchor="middle" fill="#222">6</text><rect x="732.89" y="148" width="1" height="7" fill="#555"/><text x="733.39" y="141" font-size="9" text-anchor="middle" fill="#222">7</text><rect x="769.26" y="148" width="1" height="7" fill="#555"/><text x="769.76" y="141" font-size="9" text-anchor="middle" fill="#222">8</text><rect x="805.63" y="148" width="1" height="7" fill="#555"/><text x="806.13" y="141" font-size="9" text-anchor="middle" fill="#222">9</text><rect x="842.00" y="148" width="1" height="7" fill="#555"/><text x="842.50" y="141" font-size="9" text-anchor="middle" fill="#222">10</text><rect x="878.37" y="148" width="1" height="7" fill="#555"/><text x="878.87" y="141" font-size="9" text-anchor="middle" fill="#222">11</text><rect x="914.74" y="148" width="1" height="7" fill="#555"/><text x="915.24" y="141" font-size="9" text-anchor="middle" fill="#222">12</text><rect x="951.11" y="148" width="1" height="7" fill="#555"/><text x="951.61" y="141" font-size="9" text-anchor="middle" fill="#222">13</text><rect x="987.48" y="148" width="1" height="7" fill="#555"/><text x="987.98" y="141" font-size="9" text-anchor="middle" fill="#222">14</text><rect x="1023.85" y="148" width="1" height="7" fill="#555"/><text x="1024.35" y="141" font-size="9" text-anchor="middle" fill="#222">15</text><rect x="1060.22" y="148" width="1" height="7" fill="#555"/><text x="1060.72" y="141" font-size="9" text-anchor="middle" fill="#222">16</text><rect x="1096.59" y="148" width="1" height="7" fill="#555"/><text x="1097.09" y="141" font-size="9" text-anchor="middle" fill="#222">17</text><rect x="1132.96" y="148" width="1" height="7" fill="#555"/><text x="1133.46" y="141" font-size="9" text-anchor="middle" fill="#222">18</text><path d="M884.8 145 L896 145 L890.4 151 Z" fill="#000"/></g></svg>
<svg class="g" style="position:absolute;left:0;top:150px" width="100" height="600" viewBox="0 150 100 600"><g font-family="Liberation Sans, sans-serif"><rect x="88" y="181.76" width="7" height="1" fill="#555"/><text transform="translate(81.3 182.26) rotate(-90)" x="0" y="0" font-size="9" text-anchor="middle" fill="#222">2</text><rect x="88" y="218.13" width="7" height="1" fill="#555"/><text transform="translate(81.3 218.63) rotate(-90)" x="0" y="0" font-size="9" text-anchor="middle" fill="#222">1</text><rect x="88" y="254.50" width="7" height="1" fill="#555"/><text transform="translate(81.3 255.00) rotate(-90)" x="0" y="0" font-size="9" text-anchor="middle" fill="#222">0</text><rect x="88" y="290.87" width="7" height="1" fill="#555"/><text transform="translate(81.3 291.37) rotate(-90)" x="0" y="0" font-size="9" text-anchor="middle" fill="#222">-1</text><rect x="88" y="327.24" width="7" height="1" fill="#555"/><text transform="translate(81.3 327.74) rotate(-90)" x="0" y="0" font-size="9" text-anchor="middle" fill="#222">-2</text><rect x="88" y="363.61" width="7" height="1" fill="#555"/><text transform="translate(81.3 364.11) rotate(-90)" x="0" y="0" font-size="9" text-anchor="middle" fill="#222">-3</text><rect x="88" y="399.98" width="7" height="1" fill="#555"/><text transform="translate(81.3 400.48) rotate(-90)" x="0" y="0" font-size="9" text-anchor="middle" fill="#222">-4</text><rect x="88" y="436.35" width="7" height="1" fill="#555"/><text transform="translate(81.3 436.85) rotate(-90)" x="0" y="0" font-size="9" text-anchor="middle" fill="#222">-5</text><rect x="88" y="472.72" width="7" height="1" fill="#555"/><text transform="translate(81.3 473.22) rotate(-90)" x="0" y="0" font-size="9" text-anchor="middle" fill="#222">-6</text><rect x="88" y="509.09" width="7" height="1" fill="#555"/><text transform="translate(81.3 509.59) rotate(-90)" x="0" y="0" font-size="9" text-anchor="middle" fill="#222">-7</text><rect x="88" y="545.46" width="7" height="1" fill="#555"/><text transform="translate(81.3 545.96) rotate(-90)" x="0" y="0" font-size="9" text-anchor="middle" fill="#222">-8</text><rect x="88" y="581.83" width="7" height="1" fill="#555"/><text transform="translate(81.3 582.33) rotate(-90)" x="0" y="0" font-size="9" text-anchor="middle" fill="#222">-9</text><rect x="88" y="618.20" width="7" height="1" fill="#555"/><text transform="translate(81.3 618.70) rotate(-90)" x="0" y="0" font-size="9" text-anchor="middle" fill="#222">-10</text><rect x="88" y="654.57" width="7" height="1" fill="#555"/><text transform="translate(81.3 655.07) rotate(-90)" x="0" y="0" font-size="9" text-anchor="middle" fill="#222">-11</text><rect x="88" y="690.94" width="7" height="1" fill="#555"/><text transform="translate(81.3 691.44) rotate(-90)" x="0" y="0" font-size="9" text-anchor="middle" fill="#222">-12</text><rect x="88" y="727.31" width="7" height="1" fill="#555"/><text transform="translate(81.3 727.81) rotate(-90)" x="0" y="0" font-size="9" text-anchor="middle" fill="#222">-13</text><path d="M86 419.5 L86 431 L92 425.2 Z" fill="#000"/></g></svg>
<svg style="position:absolute;left:95px;top:155px" width="1043" height="577" viewBox="95 155 1043 577"><rect x="114.60" y="155" width="1" height="577" fill="#282828"/><rect x="478.30" y="155" width="1" height="577" fill="#282828"/><rect x="842.00" y="155" width="1" height="577" fill="#282828"/><rect x="95" y="254.50" width="1043" height="1" fill="#282828"/><rect x="95" y="618.20" width="1043" height="1" fill="#282828"/></svg>
<svg style="position:absolute;left:95px;top:155px" width="1043" height="577" viewBox="95 155 1043 577"><rect x="479.00" y="255.00" width="232.70" height="334.80" fill="#a4a4a8"/><rect x="485.00" y="261.00" width="105.20" height="153.80" fill="#000033"/><rect x="596.20" y="261.00" width="109.50" height="105.30" fill="#000033"/><rect x="648.80" y="366.00" width="56.90" height="63.00" fill="#000033"/><rect x="596.20" y="372.30" width="46.50" height="211.00" fill="#000033"/><rect x="485.00" y="421.00" width="105.20" height="115.00" fill="#000033"/><rect x="485.00" y="542.20" width="105.20" height="41.10" fill="#000033"/><rect x="648.80" y="435.00" width="56.90" height="76.60" fill="#000033"/><rect x="642.70" y="518.00" width="63.00" height="30.00" fill="#000"/><rect x="648.80" y="548.00" width="56.90" height="35.30" fill="#000"/><rect x="642.70" y="548.00" width="33.60" height="6.20" fill="#a4a4a8"/><rect x="590.20" y="373.00" width="6.00" height="32.50" fill="#000"/><rect x="590.7" y="373.5" width="5.0" height="31.5" fill="none" stroke="#08b4bc" stroke-width="1"/><rect x="590.7" y="373.5" width="5.0" height="3.0" fill="#03303a" stroke="#08b4bc" stroke-width="0.9"/><rect x="590.7" y="402.0" width="5.0" height="3.0" fill="#03303a" stroke="#08b4bc" stroke-width="0.9"/><rect x="604.50" y="366.30" width="32.80" height="6.00" fill="#000"/><rect x="605.0" y="366.8" width="31.8" height="5.0" fill="none" stroke="#08b4bc" stroke-width="1"/><rect x="605.0" y="366.8" width="3" height="5.0" fill="#03303a" stroke="#08b4bc" stroke-width="0.9"/><rect x="633.8" y="366.8" width="3" height="5.0" fill="#03303a" stroke="#08b4bc" stroke-width="0.9"/><rect x="590.20" y="503.50" width="6.00" height="32.00" fill="#000"/><rect x="590.7" y="504.0" width="5.0" height="31.0" fill="none" stroke="#08b4bc" stroke-width="1"/><rect x="590.7" y="504.0" width="5.0" height="3.0" fill="#03303a" stroke="#08b4bc" stroke-width="0.9"/><rect x="590.7" y="532.0" width="5.0" height="3.0" fill="#03303a" stroke="#08b4bc" stroke-width="0.9"/><rect x="508.20" y="536.00" width="33.40" height="6.20" fill="#000"/><rect x="508.7" y="536.5" width="32.4" height="5.2" fill="none" stroke="#08b4bc" stroke-width="1"/><rect x="508.7" y="536.5" width="3" height="5.2" fill="#03303a" stroke="#08b4bc" stroke-width="0.9"/><rect x="538.1" y="536.5" width="3" height="5.2" fill="#03303a" stroke="#08b4bc" stroke-width="0.9"/><rect x="642.70" y="449.20" width="6.10" height="33.20" fill="#000"/><rect x="643.2" y="449.7" width="5.1" height="32.2" fill="none" stroke="#08b4bc" stroke-width="1"/><rect x="643.2" y="449.7" width="5.1" height="3.0" fill="#03303a" stroke="#08b4bc" stroke-width="0.9"/><rect x="643.2" y="478.9" width="5.1" height="3.0" fill="#03303a" stroke="#08b4bc" stroke-width="0.9"/><line x1="562.8" y1="403.6" x2="592.5" y2="403.6" stroke="#08b4bc" stroke-width="1.6"/><path d="M563.0 404.0 A30 30 0 0 1 593.0 374.0" fill="none" stroke="#08b4bc" stroke-width="1"/><line x1="606.3" y1="338.5" x2="606.3" y2="369.0" stroke="#08b4bc" stroke-width="1.6"/><path d="M606.0 338.0 A32 32 0 0 1 638.0 370.0" fill="none" stroke="#08b4bc" stroke-width="1"/><line x1="562.5" y1="533.6" x2="592.0" y2="533.6" stroke="#08b4bc" stroke-width="1.6"/><path d="M562.5 533.8 A30 30 0 0 1 592.5 503.8" fill="none" stroke="#08b4bc" stroke-width="1"/><line x1="539.8" y1="542.0" x2="539.8" y2="570.2" stroke="#08b4bc" stroke-width="1.6"/><path d="M539.8 572.8 A31 31 0 0 1 508.8 541.8" fill="none" stroke="#08b4bc" stroke-width="1"/><line x1="614.0" y1="480.4" x2="645.5" y2="480.4" stroke="#08b4bc" stroke-width="1.6"/><path d="M614.0 480.6 A32 32 0 0 1 646.0 448.6" fill="none" stroke="#08b4bc" stroke-width="1"/><rect x="479.00" y="313.40" width="6.00" height="33.20" fill="#02252a"/><rect x="479.5" y="313.9" width="5.0" height="32.2" fill="none" stroke="#08b4bc" stroke-width="1"/><line x1="482.5" y1="316.4" x2="482.5" y2="343.6" stroke="#08b4bc" stroke-width="1"/><line x1="479.0" y1="315.5" x2="485.0" y2="315.5" stroke="#08b4bc" stroke-width="1"/><line x1="479.0" y1="344.5" x2="485.0" y2="344.5" stroke="#08b4bc" stroke-width="1"/><rect x="705.70" y="313.20" width="6.00" height="33.30" fill="#02252a"/><rect x="706.2" y="313.7" width="5.0" height="32.3" fill="none" stroke="#08b4bc" stroke-width="1"/><line x1="708.5" y1="316.2" x2="708.5" y2="343.5" stroke="#08b4bc" stroke-width="1"/><line x1="705.7" y1="315.5" x2="711.7" y2="315.5" stroke="#08b4bc" stroke-width="1"/><line x1="705.7" y1="344.5" x2="711.7" y2="344.5" stroke="#08b4bc" stroke-width="1"/><rect x="479.00" y="464.00" width="6.00" height="33.00" fill="#02252a"/><rect x="479.5" y="464.5" width="5.0" height="32.0" fill="none" stroke="#08b4bc" stroke-width="1"/><line x1="482.5" y1="467.0" x2="482.5" y2="494.0" stroke="#08b4bc" stroke-width="1"/><line x1="479.0" y1="466.5" x2="485.0" y2="466.5" stroke="#08b4bc" stroke-width="1"/><line x1="479.0" y1="494.5" x2="485.0" y2="494.5" stroke="#08b4bc" stroke-width="1"/><rect x="487.5" y="263.5" width="32.0" height="73.0" rx="2" fill="none" stroke="#9c9cb6" stroke-width="1"/><rect x="492.5" y="266.5" width="22.0" height="11.0" rx="2.5" fill="none" stroke="#9c9cb6" stroke-width="1"/><line x1="506.3" y1="281.5" x2="519.8" y2="281.5" stroke="#9c9cb6" stroke-width="1"/><line x1="505.3" y1="285.5" x2="519.8" y2="285.5" stroke="#9c9cb6" stroke-width="1"/><line x1="506.5" y1="281.7" x2="487.3" y2="293.8" stroke="#9c9cb6" stroke-width="1"/><line x1="487.3" y1="300.3" x2="497.5" y2="303.0" stroke="#9c9cb6" stroke-width="1"/><line x1="506.5" y1="281.7" x2="497.5" y2="303.0" stroke="#9c9cb6" stroke-width="1"/><line x1="502.3" y1="284.5" x2="493.8" y2="302.3" stroke="#9c9cb6" stroke-width="1"/><rect x="555.5" y="263.5" width="32.0" height="73.0" rx="2" fill="none" stroke="#9c9cb6" stroke-width="1"/><rect x="560.5" y="266.5" width="22.0" height="11.0" rx="2.5" fill="none" stroke="#9c9cb6" stroke-width="1"/><line x1="574.3" y1="281.5" x2="587.8" y2="281.5" stroke="#9c9cb6" stroke-width="1"/><line x1="573.3" y1="285.5" x2="587.8" y2="285.5" stroke="#9c9cb6" stroke-width="1"/><line x1="574.5" y1="281.7" x2="555.3" y2="293.8" stroke="#9c9cb6" stroke-width="1"/><line x1="555.3" y1="300.3" x2="565.5" y2="303.0" stroke="#9c9cb6" stroke-width="1"/><line x1="574.5" y1="281.7" x2="565.5" y2="303.0" stroke="#9c9cb6" stroke-width="1"/><line x1="570.3" y1="284.5" x2="561.8" y2="302.3" stroke="#9c9cb6" stroke-width="1"/><rect x="520.5" y="263.5" width="16.0" height="14.0" rx="0" fill="none" stroke="#9c9cb6" stroke-width="1"/><rect x="539.5" y="263.5" width="15.0" height="14.0" rx="0" fill="none" stroke="#9c9cb6" stroke-width="1"/><rect x="517.5" y="400.5" width="34.0" height="14.0" rx="0" fill="none" stroke="#9c9cb6" stroke-width="1"/><rect x="600.5" y="261.5" width="102.0" height="13.0" rx="0" fill="none" stroke="#9c9cb6" stroke-width="1"/><rect x="669.5" y="351.5" width="33.0" height="73.0" rx="2" fill="none" stroke="#9c9cb6" stroke-width="1"/><rect x="674.5" y="410.5" width="23.0" height="11.0" rx="3" fill="none" stroke="#9c9cb6" stroke-width="1"/><line x1="669.3" y1="402.5" x2="683.8" y2="402.5" stroke="#9c9cb6" stroke-width="1"/><line x1="669.3" y1="405.5" x2="684.0" y2="405.5" stroke="#9c9cb6" stroke-width="1"/><line x1="683.8" y1="405.8" x2="701.8" y2="394.0" stroke="#9c9cb6" stroke-width="1"/><line x1="701.8" y1="387.4" x2="692.5" y2="384.6" stroke="#9c9cb6" stroke-width="1"/><line x1="683.8" y1="405.8" x2="692.5" y2="384.6" stroke="#9c9cb6" stroke-width="1"/><line x1="688.0" y1="404.5" x2="696.0" y2="385.5" stroke="#9c9cb6" stroke-width="1"/><rect x="651.5" y="410.5" width="15.0" height="14.0" rx="0" fill="none" stroke="#9c9cb6" stroke-width="1"/><rect x="488.5" y="424.5" width="15.0" height="15.0" rx="0" fill="none" stroke="#9c9cb6" stroke-width="1"/><rect x="573.5" y="424.5" width="15.0" height="15.0" rx="0" fill="none" stroke="#9c9cb6" stroke-width="1"/><rect x="505.5" y="424.5" width="66.0" height="73.0" rx="2.5" fill="none" stroke="#9c9cb6" stroke-width="1"/><rect x="510.5" y="428.5" width="23.0" height="11.0" rx="2.5" fill="none" stroke="#9c9cb6" stroke-width="1"/><rect x="543.5" y="428.5" width="22.0" height="11.0" rx="2.5" fill="none" stroke="#9c9cb6" stroke-width="1"/><line x1="541.0" y1="443.5" x2="571.7" y2="443.5" stroke="#9c9cb6" stroke-width="1"/><line x1="539.5" y1="446.5" x2="571.7" y2="446.5" stroke="#9c9cb6" stroke-width="1"/><line x1="539.0" y1="450.5" x2="571.7" y2="450.5" stroke="#9c9cb6" stroke-width="1"/><line x1="541.0" y1="443.0" x2="505.5" y2="467.3" stroke="#9c9cb6" stroke-width="1"/><line x1="505.5" y1="472.0" x2="528.0" y2="478.5" stroke="#9c9cb6" stroke-width="1"/><line x1="541.0" y1="443.0" x2="528.5" y2="478.5" stroke="#9c9cb6" stroke-width="1"/><line x1="535.5" y1="446.0" x2="524.0" y2="477.5" stroke="#9c9cb6" stroke-width="1"/><line x1="531.5" y1="448.0" x2="520.0" y2="476.5" stroke="#9c9cb6" stroke-width="1"/><rect x="556.5" y="549.5" width="33.0" height="34.0" rx="0" fill="none" stroke="#9c9cb6" stroke-width="1"/><rect x="558.5" y="551.5" width="30.0" height="31.0" rx="0" fill="none" stroke="#9c9cb6" stroke-width="1"/><line x1="561.5" y1="554.5" x2="580.0" y2="554.5" stroke="#9c9cb6" stroke-width="1"/><line x1="585.5" y1="559.0" x2="585.5" y2="578.5" stroke="#9c9cb6" stroke-width="1"/><line x1="561.5" y1="579.0" x2="580.0" y2="559.5" stroke="#9c9cb6" stroke-width="1"/><circle cx="585.3" cy="554.6" r="1.2" fill="none" stroke="#9c9cb6"/><circle cx="573.3" cy="574.5" r="1.3" fill="none" stroke="#9c9cb6"/><line x1="573.5" y1="576.0" x2="573.5" y2="583.0" stroke="#9c9cb6" stroke-width="1"/><path d="M512.8 583.3 A10 14 0 0 1 532.8 583.3" fill="none" stroke="#9c9cb6"/><path d="M515 583.3 A7.8 9 0 0 1 530.6 583.3" fill="none" stroke="#9c9cb6"/><line x1="522.5" y1="572.0" x2="522.5" y2="580.0" stroke="#9c9cb6" stroke-width="1"/><line x1="521.0" y1="574.5" x2="524.6" y2="574.5" stroke="#9c9cb6" stroke-width="1"/><path d="M658.5 435.6 L658.5 440 A9.5 10 0 0 0 677.5 440 L677.5 435.6" fill="none" stroke="#9c9cb6"/><ellipse cx="667.9" cy="444.2" rx="7.6" ry="5.3" fill="none" stroke="#9c9cb6"/><circle cx="667.9" cy="443.4" r="0.9" fill="#9c9cb6"/><line x1="667.5" y1="437.0" x2="667.5" y2="440.0" stroke="#9c9cb6" stroke-width="1"/><ellipse cx="690.9" cy="461.3" rx="9.7" ry="7.2" fill="none" stroke="#9c9cb6"/><ellipse cx="691.8" cy="461.6" rx="7.3" ry="5" fill="none" stroke="#9c9cb6"/><rect x="700.5" y="454.5" width="5.0" height="14.0" rx="0" fill="none" stroke="#9c9cb6" stroke-width="1"/><line x1="648.8" y1="485.5" x2="705.7" y2="485.5" stroke="#9c9cb6" stroke-width="1"/><rect x="651.5" y="488.5" width="53.0" height="21.0" rx="7" fill="none" stroke="#9c9cb6" stroke-width="1"/><line x1="698.5" y1="498.5" x2="704.5" y2="498.5" stroke="#9c9cb6" stroke-width="1"/><circle cx="698.5" cy="498.8" r="1" fill="#9c9cb6"/><line x1="643.6" y1="520.5" x2="703.5" y2="520.5" stroke="#b0b0b0" stroke-width="1"/><line x1="643.5" y1="520.3" x2="643.5" y2="545.6" stroke="#b0b0b0" stroke-width="1"/><line x1="643.6" y1="545.5" x2="678.2" y2="545.5" stroke="#b0b0b0" stroke-width="1"/><line x1="703.5" y1="520.3" x2="703.5" y2="581.2" stroke="#b0b0b0" stroke-width="1"/><line x1="648.9" y1="556.5" x2="678.2" y2="556.5" stroke="#b0b0b0" stroke-width="1"/><line x1="648.5" y1="556.0" x2="648.5" y2="581.2" stroke="#b0b0b0" stroke-width="1"/><line x1="648.9" y1="581.5" x2="703.5" y2="581.5" stroke="#b0b0b0" stroke-width="1"/><line x1="654.5" y1="520.3" x2="654.5" y2="545.6" stroke="#b0b0b0" stroke-width="1"/><line x1="654.5" y1="556.0" x2="654.5" y2="581.2" stroke="#b0b0b0" stroke-width="1"/><line x1="665.5" y1="520.3" x2="665.5" y2="545.6" stroke="#b0b0b0" stroke-width="1"/><line x1="665.5" y1="556.0" x2="665.5" y2="581.2" stroke="#b0b0b0" stroke-width="1"/><line x1="675.5" y1="520.3" x2="675.5" y2="545.6" stroke="#b0b0b0" stroke-width="1"/><line x1="675.5" y1="556.0" x2="675.5" y2="581.2" stroke="#b0b0b0" stroke-width="1"/><line x1="643.6" y1="532.5" x2="675.8" y2="532.5" stroke="#b0b0b0" stroke-width="1"/><line x1="648.9" y1="568.5" x2="675.8" y2="568.5" stroke="#b0b0b0" stroke-width="1"/><path d="M675.8 532.6 Q690.6 532.6 690.6 550.5 Q690.6 568.3 675.8 568.3" fill="none" stroke="#b0b0b0" stroke-width="0.9"/><path d="M678.2 545.6 Q679.8 550.5 678.2 556" fill="none" stroke="#b0b0b0" stroke-width="0.9"/><line x1="678.2" y1="545" x2="692.4" y2="520.3" stroke="#b0b0b0" stroke-width="0.9"/><line x1="678.8" y1="547.5" x2="703.5" y2="534.1" stroke="#b0b0b0" stroke-width="0.9"/><line x1="679.2" y1="550.5" x2="703.5" y2="550.5" stroke="#b0b0b0" stroke-width="0.9"/><line x1="678.8" y1="553.5" x2="703.5" y2="567.4" stroke="#b0b0b0" stroke-width="0.9"/><line x1="678.2" y1="556.5" x2="692.9" y2="581.2" stroke="#b0b0b0" stroke-width="0.9"/><path d="M649.3 532.6 L657.8 530.8 L656.8 532.6 L657.8 534.4 Z" fill="#fff"/><g font-family="Liberation Sans, sans-serif"><text x="530.4" y="364.4" text-anchor="middle" dominant-baseline="central" font-size="9.6" fill="#ffff10">Bedroom 2</text><text x="531" y="373.8" text-anchor="middle" dominant-baseline="central" font-size="6.8" fill="#a8a820">12.3m²</text><text x="650.2" y="309.8" text-anchor="middle" dominant-baseline="central" font-size="9.6" fill="#ffff10">Bedroom 3</text><text x="650.5" y="320.5" text-anchor="middle" dominant-baseline="central" font-size="6.8" fill="#a8a820">11.5m²</text><text transform="translate(615 413.8) rotate(-90)" text-anchor="middle" dominant-baseline="central" font-size="9.6" fill="#ffff10">Hallway</text><text transform="translate(625.5 413.6) rotate(-90)" text-anchor="middle" dominant-baseline="central" font-size="6.8" fill="#a8a820">7.4m²</text><text x="524.3" y="510.4" text-anchor="middle" dominant-baseline="central" font-size="9.6" fill="#ffff10">Bedroom 1</text><text x="523.8" y="521.3" text-anchor="middle" dominant-baseline="central" font-size="6.8" fill="#a8a820">9.2m²</text><text x="513.5" y="552.8" text-anchor="middle" dominant-baseline="central" font-size="9.6" fill="#ffff10">Bathroom 1</text><text x="502.2" y="563.7" text-anchor="middle" dominant-baseline="central" font-size="6.8" fill="#a8a820">3.3m²</text><text x="676" y="471.4" text-anchor="middle" dominant-baseline="central" font-size="9.6" fill="#ffff10">Bathroom 2</text><text x="675.6" y="482" text-anchor="middle" dominant-baseline="central" font-size="6.8" fill="#a8a820">3.3m²</text></g><line x1="713.0" y1="255.2" x2="754.3" y2="255.2" stroke="#0b5656" stroke-width="1.2"/><line x1="713.0" y1="589.5" x2="754.5" y2="589.5" stroke="#0b6f6f" stroke-width="1"/><line x1="750.4" y1="256.0" x2="750.4" y2="589.0" stroke="#0f8a8a" stroke-width="1.2"/><path d="M750.4 255.5 L748.6 263 L752.2 263 Z" fill="#119090"/><path d="M750.4 589 L748.6 581.5 L752.2 581.5 Z" fill="#119090"/><line x1="479.5" y1="591.0" x2="479.5" y2="632.3" stroke="#0b6f6f" stroke-width="1"/><line x1="711.5" y1="591.0" x2="711.5" y2="632.3" stroke="#0b6f6f" stroke-width="1"/><line x1="479.5" y1="628.3" x2="711.3" y2="628.3" stroke="#0f8a8a" stroke-width="1.2"/><path d="M479.5 628.3 L487 626.5 L487 630.1 Z" fill="#119090"/><path d="M711.3 628.3 L703.8 626.5 L703.8 630.1 Z" fill="#119090"/><text x="595.2" y="627" text-anchor="middle" font-size="11" fill="#13a0a0" font-family="Liberation Sans, sans-serif">6.4</text><text transform="translate(748.5 422) rotate(-90)" text-anchor="middle" font-size="11" fill="#13a0a0" font-family="Liberation Sans, sans-serif">9.2</text><g stroke="#a81010" stroke-width="1.1" fill="none"><line x1="478.8" y1="235" x2="478.8" y2="275"/><line x1="458.8" y1="255" x2="498.8" y2="255"/><circle cx="478.8" cy="255" r="4.8"/></g></svg>
<svg style="position:absolute;left:95px;top:155px" width="1043" height="577" viewBox="95 155 1043 577"><path d="M114.60 181.76h1v1h-1zM114.60 218.13h1v1h-1zM114.60 254.50h1v1h-1zM114.60 290.87h1v1h-1zM114.60 327.24h1v1h-1zM114.60 363.61h1v1h-1zM114.60 399.98h1v1h-1zM114.60 436.35h1v1h-1zM114.60 472.72h1v1h-1zM114.60 509.09h1v1h-1zM114.60 545.46h1v1h-1zM114.60 581.83h1v1h-1zM114.60 618.20h1v1h-1zM114.60 654.57h1v1h-1zM114.60 690.94h1v1h-1zM114.60 727.31h1v1h-1zM150.97 181.76h1v1h-1zM150.97 218.13h1v1h-1zM150.97 254.50h1v1h-1zM150.97 290.87h1v1h-1zM150.97 327.24h1v1h-1zM150.97 363.61h1v1h-1zM150.97 399.98h1v1h-1zM150.97 436.35h1v1h-1zM150.97 472.72h1v1h-1zM150.97 509.09h1v1h-1zM150.97 545.46h1v1h-1zM150.97 581.83h1v1h-1zM150.97 618.20h1v1h-1zM150.97 654.57h1v1h-1zM150.97 690.94h1v1h-1zM150.97 727.31h1v1h-1zM187.34 181.76h1v1h-1zM187.34 218.13h1v1h-1zM187.34 254.50h1v1h-1zM187.34 290.87h1v1h-1zM187.34 327.24h1v1h-1zM187.34 363.61h1v1h-1zM187.34 399.98h1v1h-1zM187.34 436.35h1v1h-1zM187.34 472.72h1v1h-1zM187.34 509.09h1v1h-1zM187.34 545.46h1v1h-1zM187.34 581.83h1v1h-1zM187.34 618.20h1v1h-1zM187.34 654.57h1v1h-1zM187.34 690.94h1v1h-1zM187.34 727.31h1v1h-1zM223.71 181.76h1v1h-1zM223.71 218.13h1v1h-1zM223.71 254.50h1v1h-1zM223.71 290.87h1v1h-1zM223.71 327.24h1v1h-1zM223.71 363.61h1v1h-1zM223.71 399.98h1v1h-1zM223.71 436.35h1v1h-1zM223.71 472.72h1v1h-1zM223.71 509.09h1v1h-1zM223.71 545.46h1v1h-1zM223.71 581.83h1v1h-1zM223.71 618.20h1v1h-1zM223.71 654.57h1v1h-1zM223.71 690.94h1v1h-1zM223.71 727.31h1v1h-1zM260.08 181.76h1v1h-1zM260.08 218.13h1v1h-1zM260.08 254.50h1v1h-1zM260.08 290.87h1v1h-1zM260.08 327.24h1v1h-1zM260.08 363.61h1v1h-1zM260.08 399.98h1v1h-1zM260.08 436.35h1v1h-1zM260.08 472.72h1v1h-1zM260.08 509.09h1v1h-1zM260.08 545.46h1v1h-1zM260.08 581.83h1v1h-1zM260.08 618.20h1v1h-1zM260.08 654.57h1v1h-1zM260.08 690.94h1v1h-1zM260.08 727.31h1v1h-1zM296.45 181.76h1v1h-1zM296.45 218.13h1v1h-1zM296.45 254.50h1v1h-1zM296.45 290.87h1v1h-1zM296.45 327.24h1v1h-1zM296.45 363.61h1v1h-1zM296.45 399.98h1v1h-1zM296.45 436.35h1v1h-1zM296.45 472.72h1v1h-1zM296.45 509.09h1v1h-1zM296.45 545.46h1v1h-1zM296.45 581.83h1v1h-1zM296.45 618.20h1v1h-1zM296.45 654.57h1v1h-1zM296.45 690.94h1v1h-1zM296.45 727.31h1v1h-1zM332.82 181.76h1v1h-1zM332.82 218.13h1v1h-1zM332.82 254.50h1v1h-1zM332.82 290.87h1v1h-1zM332.82 327.24h1v1h-1zM332.82 363.61h1v1h-1zM332.82 399.98h1v1h-1zM332.82 436.35h1v1h-1zM332.82 472.72h1v1h-1zM332.82 509.09h1v1h-1zM332.82 545.46h1v1h-1zM332.82 581.83h1v1h-1zM332.82 618.20h1v1h-1zM332.82 654.57h1v1h-1zM332.82 690.94h1v1h-1zM332.82 727.31h1v1h-1zM369.19 181.76h1v1h-1zM369.19 218.13h1v1h-1zM369.19 254.50h1v1h-1zM369.19 290.87h1v1h-1zM369.19 327.24h1v1h-1zM369.19 363.61h1v1h-1zM369.19 399.98h1v1h-1zM369.19 436.35h1v1h-1zM369.19 472.72h1v1h-1zM369.19 509.09h1v1h-1zM369.19 545.46h1v1h-1zM369.19 581.83h1v1h-1zM369.19 618.20h1v1h-1zM369.19 654.57h1v1h-1zM369.19 690.94h1v1h-1zM369.19 727.31h1v1h-1zM405.56 181.76h1v1h-1zM405.56 218.13h1v1h-1zM405.56 254.50h1v1h-1zM405.56 290.87h1v1h-1zM405.56 327.24h1v1h-1zM405.56 363.61h1v1h-1zM405.56 399.98h1v1h-1zM405.56 436.35h1v1h-1zM405.56 472.72h1v1h-1zM405.56 509.09h1v1h-1zM405.56 545.46h1v1h-1zM405.56 581.83h1v1h-1zM405.56 618.20h1v1h-1zM405.56 654.57h1v1h-1zM405.56 690.94h1v1h-1zM405.56 727.31h1v1h-1zM441.93 181.76h1v1h-1zM441.93 218.13h1v1h-1zM441.93 254.50h1v1h-1zM441.93 290.87h1v1h-1zM441.93 327.24h1v1h-1zM441.93 363.61h1v1h-1zM441.93 399.98h1v1h-1zM441.93 436.35h1v1h-1zM441.93 472.72h1v1h-1zM441.93 509.09h1v1h-1zM441.93 545.46h1v1h-1zM441.93 581.83h1v1h-1zM441.93 618.20h1v1h-1zM441.93 654.57h1v1h-1zM441.93 690.94h1v1h-1zM441.93 727.31h1v1h-1zM478.30 181.76h1v1h-1zM478.30 218.13h1v1h-1zM478.30 254.50h1v1h-1zM478.30 290.87h1v1h-1zM478.30 327.24h1v1h-1zM478.30 363.61h1v1h-1zM478.30 399.98h1v1h-1zM478.30 436.35h1v1h-1zM478.30 472.72h1v1h-1zM478.30 509.09h1v1h-1zM478.30 545.46h1v1h-1zM478.30 581.83h1v1h-1zM478.30 618.20h1v1h-1zM478.30 654.57h1v1h-1zM478.30 690.94h1v1h-1zM478.30 727.31h1v1h-1zM514.67 181.76h1v1h-1zM514.67 218.13h1v1h-1zM514.67 254.50h1v1h-1zM514.67 290.87h1v1h-1zM514.67 327.24h1v1h-1zM514.67 363.61h1v1h-1zM514.67 399.98h1v1h-1zM514.67 436.35h1v1h-1zM514.67 472.72h1v1h-1zM514.67 509.09h1v1h-1zM514.67 545.46h1v1h-1zM514.67 581.83h1v1h-1zM514.67 618.20h1v1h-1zM514.67 654.57h1v1h-1zM514.67 690.94h1v1h-1zM514.67 727.31h1v1h-1zM551.04 181.76h1v1h-1zM551.04 218.13h1v1h-1zM551.04 254.50h1v1h-1zM551.04 290.87h1v1h-1zM551.04 327.24h1v1h-1zM551.04 363.61h1v1h-1zM551.04 399.98h1v1h-1zM551.04 436.35h1v1h-1zM551.04 472.72h1v1h-1zM551.04 509.09h1v1h-1zM551.04 545.46h1v1h-1zM551.04 581.83h1v1h-1zM551.04 618.20h1v1h-1zM551.04 654.57h1v1h-1zM551.04 690.94h1v1h-1zM551.04 727.31h1v1h-1zM587.41 181.76h1v1h-1zM587.41 218.13h1v1h-1zM587.41 254.50h1v1h-1zM587.41 290.87h1v1h-1zM587.41 327.24h1v1h-1zM587.41 363.61h1v1h-1zM587.41 399.98h1v1h-1zM587.41 436.35h1v1h-1zM587.41 472.72h1v1h-1zM587.41 509.09h1v1h-1zM587.41 545.46h1v1h-1zM587.41 581.83h1v1h-1zM587.41 618.20h1v1h-1zM587.41 654.57h1v1h-1zM587.41 690.94h1v1h-1zM587.41 727.31h1v1h-1zM623.78 181.76h1v1h-1zM623.78 218.13h1v1h-1zM623.78 254.50h1v1h-1zM623.78 290.87h1v1h-1zM623.78 327.24h1v1h-1zM623.78 363.61h1v1h-1zM623.78 399.98h1v1h-1zM623.78 436.35h1v1h-1zM623.78 472.72h1v1h-1zM623.78 509.09h1v1h-1zM623.78 545.46h1v1h-1zM623.78 581.83h1v1h-1zM623.78 618.20h1v1h-1zM623.78 654.57h1v1h-1zM623.78 690.94h1v1h-1zM623.78 727.31h1v1h-1zM660.15 181.76h1v1h-1zM660.15 218.13h1v1h-1zM660.15 254.50h1v1h-1zM660.15 290.87h1v1h-1zM660.15 327.24h1v1h-1zM660.15 363.61h1v1h-1zM660.15 399.98h1v1h-1zM660.15 436.35h1v1h-1zM660.15 472.72h1v1h-1zM660.15 509.09h1v1h-1zM660.15 545.46h1v1h-1zM660.15 581.83h1v1h-1zM660.15 618.20h1v1h-1zM660.15 654.57h1v1h-1zM660.15 690.94h1v1h-1zM660.15 727.31h1v1h-1zM696.52 181.76h1v1h-1zM696.52 218.13h1v1h-1zM696.52 254.50h1v1h-1zM696.52 290.87h1v1h-1zM696.52 327.24h1v1h-1zM696.52 363.61h1v1h-1zM696.52 399.98h1v1h-1zM696.52 436.35h1v1h-1zM696.52 472.72h1v1h-1zM696.52 509.09h1v1h-1zM696.52 545.46h1v1h-1zM696.52 581.83h1v1h-1zM696.52 618.20h1v1h-1zM696.52 654.57h1v1h-1zM696.52 690.94h1v1h-1zM696.52 727.31h1v1h-1zM732.89 181.76h1v1h-1zM732.89 218.13h1v1h-1zM732.89 254.50h1v1h-1zM732.89 290.87h1v1h-1zM732.89 327.24h1v1h-1zM732.89 363.61h1v1h-1zM732.89 399.98h1v1h-1zM732.89 436.35h1v1h-1zM732.89 472.72h1v1h-1zM732.89 509.09h1v1h-1zM732.89 545.46h1v1h-1zM732.89 581.83h1v1h-1zM732.89 618.20h1v1h-1zM732.89 654.57h1v1h-1zM732.89 690.94h1v1h-1zM732.89 727.31h1v1h-1zM769.26 181.76h1v1h-1zM769.26 218.13h1v1h-1zM769.26 254.50h1v1h-1zM769.26 290.87h1v1h-1zM769.26 327.24h1v1h-1zM769.26 363.61h1v1h-1zM769.26 399.98h1v1h-1zM769.26 436.35h1v1h-1zM769.26 472.72h1v1h-1zM769.26 509.09h1v1h-1zM769.26 545.46h1v1h-1zM769.26 581.83h1v1h-1zM769.26 618.20h1v1h-1zM769.26 654.57h1v1h-1zM769.26 690.94h1v1h-1zM769.26 727.31h1v1h-1zM805.63 181.76h1v1h-1zM805.63 218.13h1v1h-1zM805.63 254.50h1v1h-1zM805.63 290.87h1v1h-1zM805.63 327.24h1v1h-1zM805.63 363.61h1v1h-1zM805.63 399.98h1v1h-1zM805.63 436.35h1v1h-1zM805.63 472.72h1v1h-1zM805.63 509.09h1v1h-1zM805.63 545.46h1v1h-1zM805.63 581.83h1v1h-1zM805.63 618.20h1v1h-1zM805.63 654.57h1v1h-1zM805.63 690.94h1v1h-1zM805.63 727.31h1v1h-1zM842.00 181.76h1v1h-1zM842.00 218.13h1v1h-1zM842.00 254.50h1v1h-1zM842.00 290.87h1v1h-1zM842.00 327.24h1v1h-1zM842.00 363.61h1v1h-1zM842.00 399.98h1v1h-1zM842.00 436.35h1v1h-1zM842.00 472.72h1v1h-1zM842.00 509.09h1v1h-1zM842.00 545.46h1v1h-1zM842.00 581.83h1v1h-1zM842.00 618.20h1v1h-1zM842.00 654.57h1v1h-1zM842.00 690.94h1v1h-1zM842.00 727.31h1v1h-1zM878.37 181.76h1v1h-1zM878.37 218.13h1v1h-1zM878.37 254.50h1v1h-1zM878.37 290.87h1v1h-1zM878.37 327.24h1v1h-1zM878.37 363.61h1v1h-1zM878.37 399.98h1v1h-1zM878.37 436.35h1v1h-1zM878.37 472.72h1v1h-1zM878.37 509.09h1v1h-1zM878.37 545.46h1v1h-1zM878.37 581.83h1v1h-1zM878.37 618.20h1v1h-1zM878.37 654.57h1v1h-1zM878.37 690.94h1v1h-1zM878.37 727.31h1v1h-1zM914.74 181.76h1v1h-1zM914.74 218.13h1v1h-1zM914.74 254.50h1v1h-1zM914.74 290.87h1v1h-1zM914.74 327.24h1v1h-1zM914.74 363.61h1v1h-1zM914.74 399.98h1v1h-1zM914.74 436.35h1v1h-1zM914.74 472.72h1v1h-1zM914.74 509.09h1v1h-1zM914.74 545.46h1v1h-1zM914.74 581.83h1v1h-1zM914.74 618.20h1v1h-1zM914.74 654.57h1v1h-1zM914.74 690.94h1v1h-1zM914.74 727.31h1v1h-1zM951.11 181.76h1v1h-1zM951.11 218.13h1v1h-1zM951.11 254.50h1v1h-1zM951.11 290.87h1v1h-1zM951.11 327.24h1v1h-1zM951.11 363.61h1v1h-1zM951.11 399.98h1v1h-1zM951.11 436.35h1v1h-1zM951.11 472.72h1v1h-1zM951.11 509.09h1v1h-1zM951.11 545.46h1v1h-1zM951.11 581.83h1v1h-1zM951.11 618.20h1v1h-1zM951.11 654.57h1v1h-1zM951.11 690.94h1v1h-1zM951.11 727.31h1v1h-1zM987.48 181.76h1v1h-1zM987.48 218.13h1v1h-1zM987.48 254.50h1v1h-1zM987.48 290.87h1v1h-1zM987.48 327.24h1v1h-1zM987.48 363.61h1v1h-1zM987.48 399.98h1v1h-1zM987.48 436.35h1v1h-1zM987.48 472.72h1v1h-1zM987.48 509.09h1v1h-1zM987.48 545.46h1v1h-1zM987.48 581.83h1v1h-1zM987.48 618.20h1v1h-1zM987.48 654.57h1v1h-1zM987.48 690.94h1v1h-1zM987.48 727.31h1v1h-1zM1023.85 181.76h1v1h-1zM1023.85 218.13h1v1h-1zM1023.85 254.50h1v1h-1zM1023.85 290.87h1v1h-1zM1023.85 327.24h1v1h-1zM1023.85 363.61h1v1h-1zM1023.85 399.98h1v1h-1zM1023.85 436.35h1v1h-1zM1023.85 472.72h1v1h-1zM1023.85 509.09h1v1h-1zM1023.85 545.46h1v1h-1zM1023.85 581.83h1v1h-1zM1023.85 618.20h1v1h-1zM1023.85 654.57h1v1h-1zM1023.85 690.94h1v1h-1zM1023.85 727.31h1v1h-1zM1060.22 181.76h1v1h-1zM1060.22 218.13h1v1h-1zM1060.22 254.50h1v1h-1zM1060.22 290.87h1v1h-1zM1060.22 327.24h1v1h-1zM1060.22 363.61h1v1h-1zM1060.22 399.98h1v1h-1zM1060.22 436.35h1v1h-1zM1060.22 472.72h1v1h-1zM1060.22 509.09h1v1h-1zM1060.22 545.46h1v1h-1zM1060.22 581.83h1v1h-1zM1060.22 618.20h1v1h-1zM1060.22 654.57h1v1h-1zM1060.22 690.94h1v1h-1zM1060.22 727.31h1v1h-1zM1096.59 181.76h1v1h-1zM1096.59 218.13h1v1h-1zM1096.59 254.50h1v1h-1zM1096.59 290.87h1v1h-1zM1096.59 327.24h1v1h-1zM1096.59 363.61h1v1h-1zM1096.59 399.98h1v1h-1zM1096.59 436.35h1v1h-1zM1096.59 472.72h1v1h-1zM1096.59 509.09h1v1h-1zM1096.59 545.46h1v1h-1zM1096.59 581.83h1v1h-1zM1096.59 618.20h1v1h-1zM1096.59 654.57h1v1h-1zM1096.59 690.94h1v1h-1zM1096.59 727.31h1v1h-1zM1132.96 181.76h1v1h-1zM1132.96 218.13h1v1h-1zM1132.96 254.50h1v1h-1zM1132.96 290.87h1v1h-1zM1132.96 327.24h1v1h-1zM1132.96 363.61h1v1h-1zM1132.96 399.98h1v1h-1zM1132.96 436.35h1v1h-1zM1132.96 472.72h1v1h-1zM1132.96 509.09h1v1h-1zM1132.96 545.46h1v1h-1zM1132.96 581.83h1v1h-1zM1132.96 618.20h1v1h-1zM1132.96 654.57h1v1h-1zM1132.96 690.94h1v1h-1zM1132.96 727.31h1v1h-1z" fill="#585858"/></svg>
<svg style="position:absolute;left:840px;top:375px" width="100" height="100" viewBox="840 375 100 100"><defs><radialGradient id="ring" cx="889.9" cy="425" r="40" gradientUnits="userSpaceOnUse"><stop offset="0.74" stop-color="#000" stop-opacity="0"/><stop offset="0.8" stop-color="#1e262e"/><stop offset="0.86" stop-color="#56667a"/><stop offset="0.92" stop-color="#6e7e8c"/><stop offset="0.975" stop-color="#5c6c7a"/><stop offset="1" stop-color="#000" stop-opacity="0"/></radialGradient></defs><circle cx="889.9" cy="425" r="40" fill="url(#ring)"/><path d="M889.6 424.3 L889.8 447.8 L895.2 442.8 L899.6 453 L903.6 451.2 L899.4 441.5 L906.3 441 Z" fill="#fff" stroke="#fff" stroke-width="3" stroke-linejoin="round"/><path d="M889.6 424.3 L889.8 447.8 L895.2 442.8 L899.6 453 L903.6 451.2 L899.4 441.5 L906.3 441 Z" fill="#fff" stroke="#000" stroke-width="0.9" stroke-linejoin="round"/></svg>
<div style="position:absolute;left:1156px;top:108px;width:298px;height:23px;background:linear-gradient(#ececec,#dcdcdc)"></div>
<svg style="position:absolute;left:1156px;top:110px" width="36" height="16" viewBox="0 0 36 16"><circle cx="8.2" cy="8" r="7" fill="#717171"/><path d="M5.2 5 L11.2 11 M11.2 5 L5.2 11" stroke="#fff" stroke-width="1.6"/><circle cx="26" cy="8" r="7" fill="#717171"/><rect x="25" y="4.2" width="5" height="4.3" fill="none" stroke="#fff" stroke-width="1.1"/><rect x="22" y="7.2" width="5" height="4.3" fill="#717171" stroke="#fff" stroke-width="1.1"/></svg>
<div class="t" style="position:absolute;left:1172px;width:300px;top:112.5px;text-align:center;font-size:12px;line-height:12px;color:#222">Lagenlijst</div>
<div style="position:absolute;left:1155.0px;top:130px;width:59.8px;height:26.5px;box-sizing:border-box;border:2px solid #a9a9a9;border-left-width:2px;border-right-width:2px;background:linear-gradient(#f6f6f6,#e6e6e6)"></div>
<div style="position:absolute;left:1214.8px;top:130px;width:59.8px;height:26.5px;box-sizing:border-box;border:2px solid #a9a9a9;border-left-width:0px;border-right-width:2px;background:linear-gradient(#f6f6f6,#e6e6e6)"></div>
<div style="position:absolute;left:1274.6px;top:130px;width:59.8px;height:26.5px;box-sizing:border-box;border:2px solid #a9a9a9;border-left-width:0px;border-right-width:2px;background:linear-gradient(#f6f6f6,#e6e6e6)"></div>
<div style="position:absolute;left:1334.4px;top:130px;width:59.8px;height:26.5px;box-sizing:border-box;border:2px solid #a9a9a9;border-left-width:0px;border-right-width:2px;background:linear-gradient(#f6f6f6,#e6e6e6)"></div>
<div style="position:absolute;left:1394.2px;top:130px;width:59.8px;height:26.5px;box-sizing:border-box;border:2px solid #a9a9a9;border-left-width:0px;border-right-width:2px;background:linear-gradient(#f6f6f6,#e6e6e6)"></div>
<svg style="position:absolute;left:1176.5px;top:136px" width="17" height="13" viewBox="0 0 17 13"><ellipse cx="8.2" cy="6" rx="7.3" ry="5.3" fill="#000"/><path d="M3.2 6.2 Q8.2 13 13.2 6.2 Q8.2 9.5 3.2 6.2 Z" fill="#fff"/><ellipse cx="8.2" cy="6.8" rx="4.8" ry="3.3" fill="#fff"/><circle cx="8" cy="5.6" r="2.9" fill="#000"/><circle cx="7.2" cy="4.8" r="0.7" fill="#888"/></svg>
<svg style="position:absolute;left:1236.5px;top:136px" width="17" height="13" viewBox="0 0 17 13"><ellipse cx="8.2" cy="6" rx="7.3" ry="5.3" fill="#9c9c9c"/><path d="M3.2 6.2 Q8.2 13 13.2 6.2 Q8.2 9.5 3.2 6.2 Z" fill="#fff"/><ellipse cx="8.2" cy="6.8" rx="4.8" ry="3.3" fill="#fff"/><circle cx="8" cy="5.6" r="2.9" fill="#9c9c9c"/><circle cx="7.2" cy="4.8" r="0.7" fill="#888"/></svg>
<svg style="position:absolute;left:1296px;top:134px" width="18" height="18" viewBox="0 0 18 18"><path d="M9 3v12M3 9h12" stroke="#e01010" stroke-width="3"/></svg>
<svg style="position:absolute;left:1356px;top:134px" width="18" height="18" viewBox="0 0 18 18"><path d="M3 9h12" stroke="#e01010" stroke-width="3"/></svg>
<svg style="position:absolute;left:1416px;top:133px" width="19" height="20" viewBox="0 0 19 20"><path d="M2 16 L13.5 3.5 L16 6 L4.5 18 Z" fill="#e0a838" stroke="#8a6010" stroke-width="0.7"/><path d="M13.5 3.5 L15 2 L17.5 4.5 L16 6 Z" fill="#e83838"/><path d="M2 16 L4.5 18 L1 18.5 Z" fill="#333"/></svg>
<div style="position:absolute;left:1155px;top:157px;width:299px;height:641px;background:#fff;box-sizing:border-box;border-left:1px solid #c0c0c0"></div>
<div style="position:absolute;left:1161px;top:163px;width:16px;height:9px;box-sizing:border-box;border:1px solid #000;background:#000"></div>
<div class="t" style="position:absolute;left:1182.5px;top:160.2px;font-size:13.5px;line-height:13.5px;color:#111;white-space:nowrap;letter-spacing:0.15px">0</div>
<svg style="position:absolute;left:1415px;top:160.8px" width="17" height="13" viewBox="0 0 17 13"><ellipse cx="8.2" cy="6" rx="7.3" ry="5.3" fill="#000"/><path d="M3.2 6.2 Q8.2 13 13.2 6.2 Q8.2 9.5 3.2 6.2 Z" fill="#fff"/><ellipse cx="8.2" cy="6.8" rx="4.8" ry="3.3" fill="#fff"/><circle cx="8" cy="5.6" r="2.9" fill="#000"/><circle cx="7.2" cy="4.8" r="0.7" fill="#888"/></svg>
<svg style="position:absolute;left:1439px;top:159.5px" width="12" height="15" viewBox="0 0 12 15"><path d="M2.8 7 L2.8 4.8 Q2.8 1 6 1 Q9.2 1 9.2 4.8 L9.2 7" stroke="#b9b9b9" stroke-width="1.4" fill="none"/><rect x="1" y="7" width="10" height="7" fill="#b9b9b9"/></svg>
<div style="position:absolute;left:1161px;top:183px;width:16px;height:9px;box-sizing:border-box;border:1px solid #000;background:#000033"></div>
<div class="t" style="position:absolute;left:1182.5px;top:180.2px;font-size:13.5px;line-height:13.5px;color:#111;white-space:nowrap;letter-spacing:0.15px">Achtergrond</div>
<svg style="position:absolute;left:1415px;top:180.8px" width="17" height="13" viewBox="0 0 17 13"><ellipse cx="8.2" cy="6" rx="7.3" ry="5.3" fill="#000"/><path d="M3.2 6.2 Q8.2 13 13.2 6.2 Q8.2 9.5 3.2 6.2 Z" fill="#fff"/><ellipse cx="8.2" cy="6.8" rx="4.8" ry="3.3" fill="#fff"/><circle cx="8" cy="5.6" r="2.9" fill="#000"/><circle cx="7.2" cy="4.8" r="0.7" fill="#888"/></svg>
<svg style="position:absolute;left:1439px;top:179.5px" width="12" height="15" viewBox="0 0 12 15"><path d="M2.8 7 L2.8 4.8 Q2.8 1 6 1 Q9.2 1 9.2 4.8 L9.2 7" stroke="#ff0000" stroke-width="1.4" fill="none"/><rect x="1" y="7" width="10" height="7" fill="#ff0000"/></svg>
<div style="position:absolute;left:1161px;top:203px;width:16px;height:9px;box-sizing:border-box;border:1px solid #000;background:#007f7f"></div>
<div class="t" style="position:absolute;left:1182.5px;top:200.2px;font-size:13.5px;line-height:13.5px;color:#111;white-space:nowrap;letter-spacing:0.15px">Afmetingen</div>
<svg style="position:absolute;left:1415px;top:200.8px" width="17" height="13" viewBox="0 0 17 13"><ellipse cx="8.2" cy="6" rx="7.3" ry="5.3" fill="#000"/><path d="M3.2 6.2 Q8.2 13 13.2 6.2 Q8.2 9.5 3.2 6.2 Z" fill="#fff"/><ellipse cx="8.2" cy="6.8" rx="4.8" ry="3.3" fill="#fff"/><circle cx="8" cy="5.6" r="2.9" fill="#000"/><circle cx="7.2" cy="4.8" r="0.7" fill="#888"/></svg>
<svg style="position:absolute;left:1439px;top:199.5px" width="12" height="15" viewBox="0 0 12 15"><path d="M2.8 7 L2.8 4.8 Q2.8 1 6 1 Q9.2 1 9.2 4.8 L9.2 7" stroke="#b9b9b9" stroke-width="1.4" fill="none"/><rect x="1" y="7" width="10" height="7" fill="#b9b9b9"/></svg>
<div style="position:absolute;left:1161px;top:223px;width:16px;height:9px;box-sizing:border-box;border:1px solid #000;background:#fff"></div>
<div class="t" style="position:absolute;left:1182.5px;top:220.2px;font-size:13.5px;line-height:13.5px;color:#111;white-space:nowrap;letter-spacing:0.15px">Defpoints</div>
<svg style="position:absolute;left:1415px;top:220.8px" width="17" height="13" viewBox="0 0 17 13"><ellipse cx="8.2" cy="6" rx="7.3" ry="5.3" fill="#000"/><path d="M3.2 6.2 Q8.2 13 13.2 6.2 Q8.2 9.5 3.2 6.2 Z" fill="#fff"/><ellipse cx="8.2" cy="6.8" rx="4.8" ry="3.3" fill="#fff"/><circle cx="8" cy="5.6" r="2.9" fill="#000"/><circle cx="7.2" cy="4.8" r="0.7" fill="#888"/></svg>
<svg style="position:absolute;left:1439px;top:219.5px" width="12" height="15" viewBox="0 0 12 15"><path d="M2.8 7 L2.8 4.8 Q2.8 1 6 1 Q9.2 1 9.2 4.8 L9.2 7" stroke="#b9b9b9" stroke-width="1.4" fill="none"/><rect x="1" y="7" width="10" height="7" fill="#b9b9b9"/></svg>
<div style="position:absolute;left:1161px;top:243px;width:16px;height:9px;box-sizing:border-box;border:1px solid #000;background:#00ffff"></div>
<div class="t" style="position:absolute;left:1182.5px;top:240.2px;font-size:13.5px;line-height:13.5px;color:#111;white-space:nowrap;letter-spacing:0.15px">Deuren</div>
<svg style="position:absolute;left:1415px;top:240.8px" width="17" height="13" viewBox="0 0 17 13"><ellipse cx="8.2" cy="6" rx="7.3" ry="5.3" fill="#000"/><path d="M3.2 6.2 Q8.2 13 13.2 6.2 Q8.2 9.5 3.2 6.2 Z" fill="#fff"/><ellipse cx="8.2" cy="6.8" rx="4.8" ry="3.3" fill="#fff"/><circle cx="8" cy="5.6" r="2.9" fill="#000"/><circle cx="7.2" cy="4.8" r="0.7" fill="#888"/></svg>
<svg style="position:absolute;left:1439px;top:239.5px" width="12" height="15" viewBox="0 0 12 15"><path d="M2.8 7 L2.8 4.8 Q2.8 1 6 1 Q9.2 1 9.2 4.8 L9.2 7" stroke="#b9b9b9" stroke-width="1.4" fill="none"/><rect x="1" y="7" width="10" height="7" fill="#b9b9b9"/></svg>
<div style="position:absolute;left:1161px;top:263px;width:16px;height:9px;box-sizing:border-box;border:1px solid #000;background:#ffff00"></div>
<div class="t" style="position:absolute;left:1182.5px;top:260.2px;font-size:13.5px;line-height:13.5px;color:#111;white-space:nowrap;letter-spacing:0.15px">Etiketten</div>
<svg style="position:absolute;left:1415px;top:260.8px" width="17" height="13" viewBox="0 0 17 13"><ellipse cx="8.2" cy="6" rx="7.3" ry="5.3" fill="#000"/><path d="M3.2 6.2 Q8.2 13 13.2 6.2 Q8.2 9.5 3.2 6.2 Z" fill="#fff"/><ellipse cx="8.2" cy="6.8" rx="4.8" ry="3.3" fill="#fff"/><circle cx="8" cy="5.6" r="2.9" fill="#000"/><circle cx="7.2" cy="4.8" r="0.7" fill="#888"/></svg>
<svg style="position:absolute;left:1439px;top:259.5px" width="12" height="15" viewBox="0 0 12 15"><path d="M2.8 7 L2.8 4.8 Q2.8 1 6 1 Q9.2 1 9.2 4.8 L9.2 7" stroke="#b9b9b9" stroke-width="1.4" fill="none"/><rect x="1" y="7" width="10" height="7" fill="#b9b9b9"/></svg>
<div style="position:absolute;left:1161px;top:283px;width:16px;height:9px;box-sizing:border-box;border:1px solid #000;background:#c0c0c0"></div>
<div class="t" style="position:absolute;left:1182.5px;top:280.2px;font-size:13.5px;line-height:13.5px;color:#111;white-space:nowrap;letter-spacing:0.15px">Interieurs</div>
<svg style="position:absolute;left:1415px;top:280.8px" width="17" height="13" viewBox="0 0 17 13"><ellipse cx="8.2" cy="6" rx="7.3" ry="5.3" fill="#000"/><path d="M3.2 6.2 Q8.2 13 13.2 6.2 Q8.2 9.5 3.2 6.2 Z" fill="#fff"/><ellipse cx="8.2" cy="6.8" rx="4.8" ry="3.3" fill="#fff"/><circle cx="8" cy="5.6" r="2.9" fill="#000"/><circle cx="7.2" cy="4.8" r="0.7" fill="#888"/></svg>
<svg style="position:absolute;left:1439px;top:279.5px" width="12" height="15" viewBox="0 0 12 15"><path d="M2.8 7 L2.8 4.8 Q2.8 1 6 1 Q9.2 1 9.2 4.8 L9.2 7" stroke="#b9b9b9" stroke-width="1.4" fill="none"/><rect x="1" y="7" width="10" height="7" fill="#b9b9b9"/></svg>
<div style="position:absolute;left:1161px;top:303px;width:16px;height:9px;box-sizing:border-box;border:1px solid #000;background:#808000"></div>
<div class="t" style="position:absolute;left:1182.5px;top:300.2px;font-size:13.5px;line-height:13.5px;color:#111;white-space:nowrap;letter-spacing:0.15px">Kamergroottes</div>
<svg style="position:absolute;left:1415px;top:300.8px" width="17" height="13" viewBox="0 0 17 13"><ellipse cx="8.2" cy="6" rx="7.3" ry="5.3" fill="#000"/><path d="M3.2 6.2 Q8.2 13 13.2 6.2 Q8.2 9.5 3.2 6.2 Z" fill="#fff"/><ellipse cx="8.2" cy="6.8" rx="4.8" ry="3.3" fill="#fff"/><circle cx="8" cy="5.6" r="2.9" fill="#000"/><circle cx="7.2" cy="4.8" r="0.7" fill="#888"/></svg>
<svg style="position:absolute;left:1439px;top:299.5px" width="12" height="15" viewBox="0 0 12 15"><path d="M2.8 7 L2.8 4.8 Q2.8 1 6 1 Q9.2 1 9.2 4.8 L9.2 7" stroke="#b9b9b9" stroke-width="1.4" fill="none"/><rect x="1" y="7" width="10" height="7" fill="#b9b9b9"/></svg>
<div style="position:absolute;left:1161px;top:323px;width:16px;height:9px;box-sizing:border-box;border:1px solid #000;background:#a0a0a4"></div>
<div class="t" style="position:absolute;left:1182.5px;top:320.2px;font-size:13.5px;line-height:13.5px;color:#111;white-space:nowrap;letter-spacing:0.15px">Muren</div>
<svg style="position:absolute;left:1415px;top:320.8px" width="17" height="13" viewBox="0 0 17 13"><ellipse cx="8.2" cy="6" rx="7.3" ry="5.3" fill="#000"/><path d="M3.2 6.2 Q8.2 13 13.2 6.2 Q8.2 9.5 3.2 6.2 Z" fill="#fff"/><ellipse cx="8.2" cy="6.8" rx="4.8" ry="3.3" fill="#fff"/><circle cx="8" cy="5.6" r="2.9" fill="#000"/><circle cx="7.2" cy="4.8" r="0.7" fill="#888"/></svg>
<svg style="position:absolute;left:1439px;top:319.5px" width="12" height="15" viewBox="0 0 12 15"><path d="M2.8 7 L2.8 4.8 Q2.8 1 6 1 Q9.2 1 9.2 4.8 L9.2 7" stroke="#b9b9b9" stroke-width="1.4" fill="none"/><rect x="1" y="7" width="10" height="7" fill="#b9b9b9"/></svg>
<div style="position:absolute;left:1161px;top:343px;width:16px;height:9px;box-sizing:border-box;border:1px solid #000;background:#c0c0c0"></div>
<div class="t" style="position:absolute;left:1182.5px;top:340.2px;font-size:13.5px;line-height:13.5px;color:#111;white-space:nowrap;letter-spacing:0.15px">Trap</div>
<svg style="position:absolute;left:1415px;top:340.8px" width="17" height="13" viewBox="0 0 17 13"><ellipse cx="8.2" cy="6" rx="7.3" ry="5.3" fill="#000"/><path d="M3.2 6.2 Q8.2 13 13.2 6.2 Q8.2 9.5 3.2 6.2 Z" fill="#fff"/><ellipse cx="8.2" cy="6.8" rx="4.8" ry="3.3" fill="#fff"/><circle cx="8" cy="5.6" r="2.9" fill="#000"/><circle cx="7.2" cy="4.8" r="0.7" fill="#888"/></svg>
<svg style="position:absolute;left:1439px;top:339.5px" width="12" height="15" viewBox="0 0 12 15"><path d="M2.8 7 L2.8 4.8 Q2.8 1 6 1 Q9.2 1 9.2 4.8 L9.2 7" stroke="#b9b9b9" stroke-width="1.4" fill="none"/><rect x="1" y="7" width="10" height="7" fill="#b9b9b9"/></svg>
<div style="position:absolute;left:1161px;top:363px;width:16px;height:9px;box-sizing:border-box;border:1px solid #000;background:#00ffff"></div>
<div class="t" style="position:absolute;left:1182.5px;top:360.2px;font-size:13.5px;line-height:13.5px;color:#111;white-space:nowrap;letter-spacing:0.15px">Windows</div>
<svg style="position:absolute;left:1415px;top:360.8px" width="17" height="13" viewBox="0 0 17 13"><ellipse cx="8.2" cy="6" rx="7.3" ry="5.3" fill="#000"/><path d="M3.2 6.2 Q8.2 13 13.2 6.2 Q8.2 9.5 3.2 6.2 Z" fill="#fff"/><ellipse cx="8.2" cy="6.8" rx="4.8" ry="3.3" fill="#fff"/><circle cx="8" cy="5.6" r="2.9" fill="#000"/><circle cx="7.2" cy="4.8" r="0.7" fill="#888"/></svg>
<svg style="position:absolute;left:1439px;top:359.5px" width="12" height="15" viewBox="0 0 12 15"><path d="M2.8 7 L2.8 4.8 Q2.8 1 6 1 Q9.2 1 9.2 4.8 L9.2 7" stroke="#b9b9b9" stroke-width="1.4" fill="none"/><rect x="1" y="7" width="10" height="7" fill="#b9b9b9"/></svg>
<svg style="position:absolute;left:1393px;top:298px" width="16" height="18" viewBox="0 0 16 18"><path d="M2 16 L13.5 3.5 L16 6 L4.5 18 Z" fill="#e0a838" stroke="#8a6010" stroke-width="0.7"/><path d="M13.5 3.5 L15 2 L17.5 4.5 L16 6 Z" fill="#e83838"/><path d="M2 16 L4.5 18 L1 18.5 Z" fill="#333"/></svg>
<div style="position:absolute;left:1455px;top:108px;width:43px;height:690px;background:linear-gradient(90deg,#f2f2f2,#dedede 50%,#c9c9c9)"></div>
<div style="position:absolute;left:1498px;top:108px;width:2px;height:690px;background:#bababa"></div>
<div style="position:absolute;left:1454px;top:108px;width:1px;height:690px;background:#c4c4c4"></div>
<div style="position:absolute;left:1462.5px;top:116px;width:2px;height:2px;background:#9c9c9c"></div>
<div style="position:absolute;left:1468.5px;top:116px;width:2px;height:2px;background:#9c9c9c"></div>
<div style="position:absolute;left:1474.5px;top:116px;width:2px;height:2px;background:#9c9c9c"></div>
<div style="position:absolute;left:1480.5px;top:116px;width:2px;height:2px;background:#9c9c9c"></div>
<div style="position:absolute;left:1486.5px;top:116px;width:2px;height:2px;background:#9c9c9c"></div>
<div style="position:absolute;left:1456px;top:120px;width:42.5px;height:42px;background:#b9b9b9;border-radius:6px"></div>
<div style="position:absolute;left:1456px;top:417px;width:42.5px;height:42px;background:#b9b9b9;border-radius:6px"></div>
<div style="position:absolute;left:1457.5px;top:260.8px;width:40.5px;height:1px;background:repeating-linear-gradient(90deg,#7a7a7a 0 1px,transparent 1px 4px)"></div>
<div style="position:absolute;left:1457.5px;top:409.0px;width:40.5px;height:1px;background:repeating-linear-gradient(90deg,#7a7a7a 0 1px,transparent 1px 4px)"></div>
<svg style="position:absolute;left:1463px;top:127px" width="28" height="28" viewBox="0 0 28 28"><rect x="0.5" y="0.5" width="27" height="27" fill="#fff" stroke="#222" stroke-width="1"/><rect x="0" y="0" width="28" height="5" fill="#000"/><rect x="1.3" y="1.2" width="3" height="2.8" fill="#fff"/><path d="M8 12 L14 9.5 L14 21 L8 23.5 Z" fill="#c8c8c8" stroke="#555" stroke-width="0.8"/><path d="M11 11 L21 8 L21 19 L11 22 Z" fill="#f4f4f4" stroke="#777" stroke-width="0.8"/><path d="M14 18 L18 11 L18.5 18 Z" fill="none" stroke="#e04040" stroke-width="0.8"/></svg>
<svg style="position:absolute;left:1463px;top:173.6px" width="28" height="28" viewBox="0 0 28 28"><rect x="0.5" y="0.5" width="27" height="27" fill="#fff" stroke="#222" stroke-width="1"/><rect x="0" y="0" width="28" height="5" fill="#000"/><rect x="1.3" y="1.2" width="3" height="2.8" fill="#fff"/><rect x="7.5" y="10" width="10" height="7" fill="#f2ecc8" stroke="#888" stroke-width="0.8"/><circle cx="16.5" cy="17.5" r="4.5" fill="#f2ecc8" fill-opacity="0.85" stroke="#888" stroke-width="0.8"/></svg>
<svg style="position:absolute;left:1463px;top:220px" width="28" height="28" viewBox="0 0 28 28"><rect x="0.5" y="0.5" width="27" height="27" fill="#fff" stroke="#222" stroke-width="1"/><rect x="0" y="0" width="28" height="5" fill="#000"/><rect x="1.3" y="1.2" width="3" height="2.8" fill="#fff"/><rect x="6.5" y="10.5" width="15" height="10" rx="2" fill="#f6f6f6" stroke="#b0c4dc" stroke-width="1"/></svg>
<svg style="position:absolute;left:1463px;top:276px" width="28" height="28" viewBox="0 0 28 28"><rect x="0.5" y="0.5" width="27" height="27" fill="#fff" stroke="#222" stroke-width="1"/><rect x="0" y="0" width="28" height="5" fill="#000"/><rect x="1.3" y="1.2" width="3" height="2.8" fill="#fff"/><rect x="5" y="9" width="4" height="3" fill="#000"/><rect x="5" y="15" width="4" height="3" fill="#000"/><rect x="5" y="21" width="4" height="3" fill="#000"/><rect x="11.5" y="9.2" width="12" height="2.6" fill="none" stroke="#333" stroke-width="0.8"/><rect x="11.5" y="15.2" width="12" height="2.6" fill="none" stroke="#333" stroke-width="0.8"/><rect x="11.5" y="21.2" width="12" height="2.6" fill="none" stroke="#333" stroke-width="0.8"/></svg>
<svg style="position:absolute;left:1463px;top:321.7px" width="28" height="28" viewBox="0 0 28 28"><rect x="0.5" y="0.5" width="27" height="27" fill="#fff" stroke="#222" stroke-width="1"/><rect x="0" y="0" width="28" height="5" fill="#000"/><rect x="1.3" y="1.2" width="3" height="2.8" fill="#fff"/><path d="M6 10 L22 10 L16 16 L16 23 L12 21 L12 16 Z" fill="#b8b8b8" stroke="#444" stroke-width="0.8"/></svg>
<svg style="position:absolute;left:1463px;top:368px" width="28" height="28" viewBox="0 0 28 28"><rect x="0.5" y="0.5" width="27" height="27" fill="#fff" stroke="#222" stroke-width="1"/><rect x="0" y="0" width="28" height="5" fill="#000"/><rect x="1.3" y="1.2" width="3" height="2.8" fill="#fff"/><path d="M6 9 L12 13 L22 13 L22 20 L12 20 L6 24 Z" fill="#f4f4f4" stroke="#444" stroke-width="0.8"/><rect x="13" y="14" width="8" height="5" fill="#999"/><path d="M4 16.5 L24 16.5" stroke="#e88" stroke-width="0.6" stroke-dasharray="1 1"/></svg>
<svg style="position:absolute;left:1463px;top:424.4px" width="28" height="28" viewBox="0 0 28 28"><rect x="0.5" y="0.5" width="27" height="27" fill="#fff" stroke="#222" stroke-width="1"/><rect x="0" y="0" width="28" height="5" fill="#000"/><rect x="1.3" y="1.2" width="3" height="2.8" fill="#fff"/><path d="M4 9h10M4 12h9M4 15h11M4 18h12" stroke="#999" stroke-width="0.7"/><rect x="1" y="22" width="26" height="5" fill="#fff" stroke="#555" stroke-width="0.6"/><path d="M12 24.5h12" stroke="#666" stroke-width="1"/></svg>
<svg style="position:absolute;left:1463px;top:471px" width="28" height="28" viewBox="0 0 28 28"><rect x="0.5" y="0.5" width="27" height="27" fill="#fff" stroke="#222" stroke-width="1"/><rect x="0" y="0" width="28" height="5" fill="#000"/><rect x="1.3" y="1.2" width="3" height="2.8" fill="#fff"/><rect x="8" y="9" width="12" height="15" fill="#c8892e"/><rect x="9.5" y="10.5" width="9" height="12" fill="#f4f4f4"/><rect x="11" y="7.5" width="6" height="3" fill="#999"/><path d="M11 14h6M11 16.5h6M11 19h5" stroke="#bbb" stroke-width="0.7"/></svg>
<div style="position:absolute;left:0px;top:798px;width:1500px;height:46px;background:#dcdcdc"></div>
<div class="t" style="position:absolute;left:2px;top:807.68px;font-size:10.3px;line-height:10.3px;color:#222;white-space:nowrap;letter-spacing:0.05px">11.3042,-4.6746</div>
<div class="t" style="position:absolute;left:2px;top:827.88px;font-size:10.3px;line-height:10.3px;color:#222;white-space:nowrap;letter-spacing:0.05px">@11.3042,-4.6746</div>
<div style="position:absolute;left:253px;top:802px;width:1px;height:40px;background:#8a8a8a"></div>
<div class="t" style="position:absolute;left:256px;top:807.68px;font-size:10.3px;line-height:10.3px;color:#222;white-space:nowrap;letter-spacing:0.05px">12.2326&lt;337.53°</div>
<div class="t" style="position:absolute;left:256px;top:827.88px;font-size:10.3px;line-height:10.3px;color:#222;white-space:nowrap;letter-spacing:0.05px">@12.2326&lt;337.53°</div>
<div style="position:absolute;left:506px;top:819px;width:6px;height:6px;background:#c6c6c6;border-radius:3px"></div>
<div class="t" style="position:absolute;left:573px;top:818.48px;font-size:10.3px;line-height:10.3px;color:#222;white-space:nowrap;letter-spacing:0.05px">Object of gebied selecteren</div>
<svg style="position:absolute;left:715px;top:804px" width="22" height="34" viewBox="0 0 22 34"><rect x="2" y="1.5" width="17" height="29.5" rx="8.5" fill="#fff" stroke="#333" stroke-width="1"/><path d="M2 13 Q10.5 11 19 13" stroke="#333" stroke-width="1" fill="none"/><rect x="8.8" y="3.5" width="3.4" height="6" rx="1.7" fill="none" stroke="#333" stroke-width="0.9"/><path d="M10.5 9.5 L10.5 12" stroke="#333"/></svg>
<div style="position:absolute;left:940px;top:819px;width:6px;height:6px;background:#c6c6c6;border-radius:3px"></div>
<div class="t" style="position:absolute;left:949px;top:818.48px;font-size:10.3px;line-height:10.3px;color:#222;white-space:nowrap;letter-spacing:0.05px">Geen objecten geselecteerd.</div>
<div style="position:absolute;left:1269px;top:819px;width:6px;height:6px;background:#c6c6c6;border-radius:3px"></div>
</body></html>
